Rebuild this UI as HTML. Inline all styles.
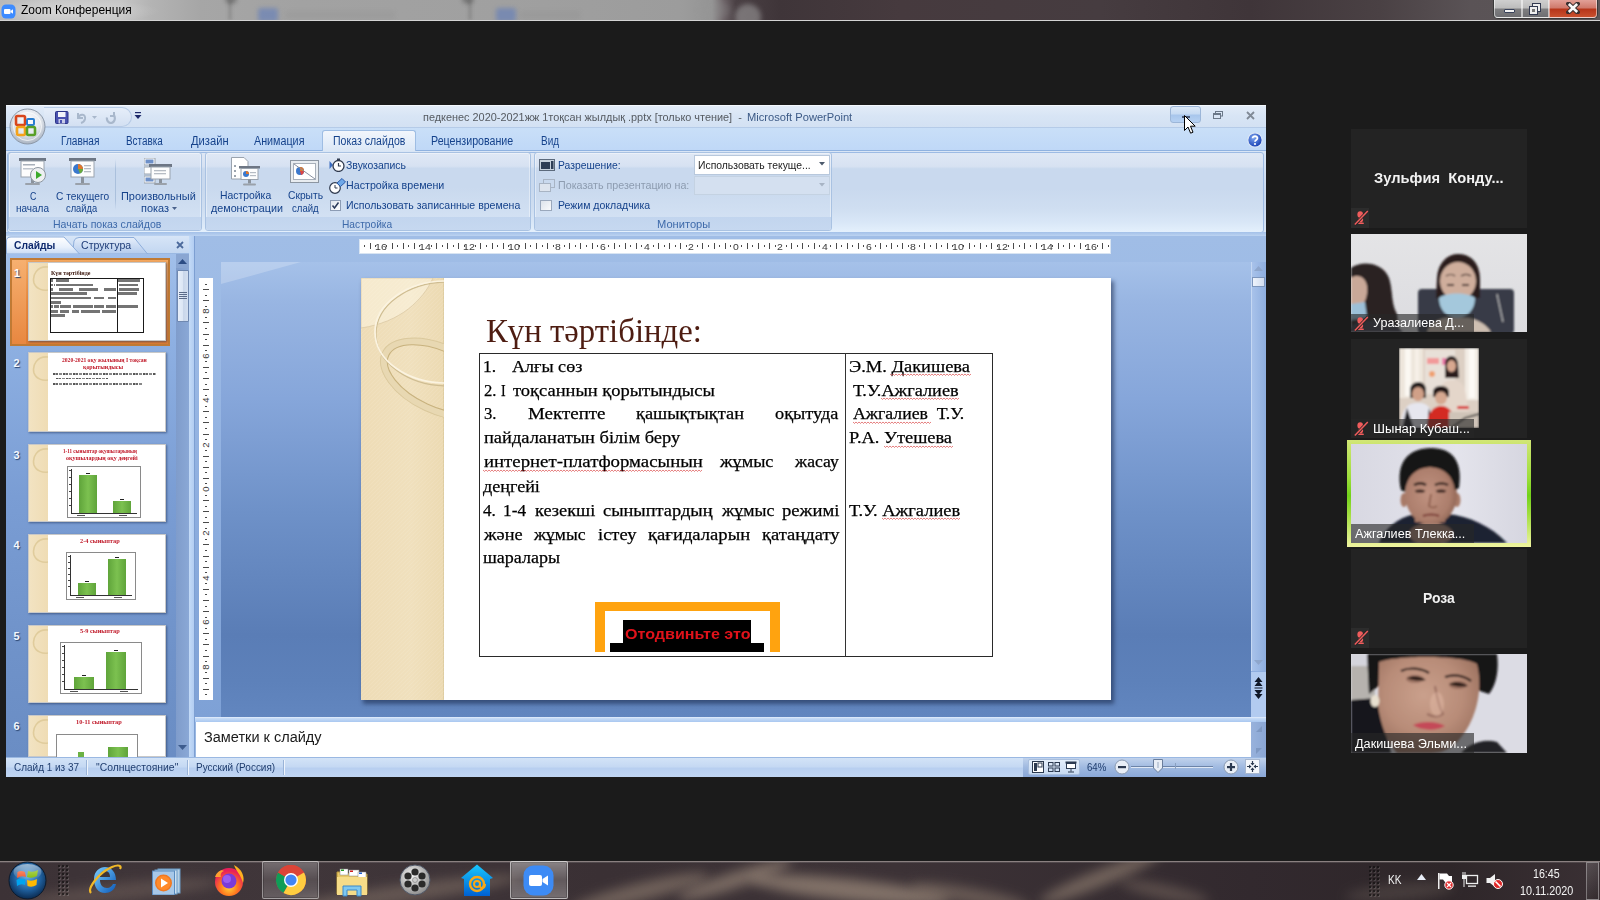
<!DOCTYPE html>
<html><head><meta charset="utf-8"><style>*{margin:0;padding:0;box-sizing:border-box}
html,body{width:1600px;height:900px;overflow:hidden;background:#1b1b1b;font-family:"Liberation Sans",sans-serif;position:relative}
.a{position:absolute}
.tx{white-space:pre;transform-origin:0 0}
</style></head><body>
<div class="a" style="left:0px;top:0px;width:1600px;height:20px;background:linear-gradient(90deg,#b9b9b9 0,#c4c4c4 40px,#c6c6c6 120px,#b4b4b4 150px,#a6a6a6 200px,#a2a2a2 300px,#a0a0a0 500px,#9c9c9c 680px,#959595 712px,#6a6064 724px,#4a4044 736px,#3f3539 780px,#463a3e 900px,#463c40 1100px,#3f3539 1250px,#4a4144 1380px,#5a5356 1470px,#5c5658 1600px)"></div>
<div class="a" style="left:0px;top:0px;width:160px;height:20px;background:radial-gradient(ellipse 90px 12px at 70px 11px,rgba(235,235,235,.45),transparent)"></div>
<div class="a" style="left:0;top:0;width:1600px;height:20px;overflow:hidden"><div class="a" style="left:228px;top:0px;width:4px;height:20px;background:rgba(60,60,60,.18);filter:blur(1.5px)"></div><div class="a" style="left:468px;top:0px;width:4px;height:20px;background:rgba(60,60,60,.18);filter:blur(1.5px)"></div><div class="a" style="left:258px;top:8px;width:20px;height:14px;background:rgba(90,120,190,.55);filter:blur(2px);border-radius:3px"></div><div class="a" style="left:496px;top:8px;width:20px;height:14px;background:rgba(90,120,190,.55);filter:blur(2px);border-radius:3px"></div><div class="a" style="left:285px;top:11px;width:110px;height:8px;background:rgba(120,120,120,.12);filter:blur(2px)"></div><div class="a" style="left:520px;top:11px;width:60px;height:8px;background:rgba(120,120,120,.12);filter:blur(2px)"></div><div class="a" style="left:735px;top:4px;width:26px;height:26px;background:rgba(170,170,170,.5);filter:blur(2.5px);border-radius:50%"></div><div class="a" style="left:700px;top:0px;width:30px;height:20px;background:rgba(150,150,150,.3);filter:blur(3px);border-radius:50%"></div><div class="a" style="left:225px;top:-6px;width:12px;height:10px;background:rgba(40,40,40,.35);filter:blur(2px);border-radius:50%"></div><div class="a" style="left:462px;top:-6px;width:12px;height:10px;background:rgba(40,40,40,.35);filter:blur(2px);border-radius:50%"></div></div>
<div class="a" style="left:0px;top:20px;width:1600px;height:1px;background:#d4d4d4"></div>
<svg class="a" style="left:1px;top:4px;" width="15" height="15" viewBox="0 0 15 15"><rect x="0.5" y="0.5" width="14" height="14" rx="4.5" fill="#3d8bff"/><rect x="3" y="5" width="6.5" height="5" rx="1" fill="#fff"/><path d="M9.5 7 L12 5.2 V9.8 L9.5 8z" fill="#fff"/></svg>
<span id="t0" class="a tx " style="left:21.00px;transform:scaleX(0.9586);top:4.42px;font-size:12.5px;line-height:12.5px;color:#000;font-weight:normal;font-family:'Liberation Sans',sans-serif;">Zoom Конференция</span>
<div class="a" style="left:1493px;top:0px;width:105px;height:19px;border:1px solid #3a3a3a;border-top:none;border-radius:0 0 5px 5px;background:#888"></div>
<div class="a" style="left:1494px;top:0px;width:28px;height:18px;border-radius:0 0 0 4px;border:1px solid rgba(255,255,255,.55);border-top:none;background:linear-gradient(180deg,#cfcfcf 0,#bdbdbd 45%,#7e7e80 55%,#6e6e72 100%)"></div>
<div class="a" style="left:1522px;top:0px;width:27px;height:18px;border:1px solid rgba(255,255,255,.55);border-top:none;background:linear-gradient(180deg,#cfcfcf 0,#bdbdbd 45%,#7e7e80 55%,#6e6e72 100%)"></div>
<div class="a" style="left:1549px;top:0px;width:48px;height:18px;border-radius:0 0 4px 0;border:1px solid rgba(255,255,255,.5);border-top:none;background:linear-gradient(180deg,#e2a097 0,#d07a6c 45%,#b7361b 55%,#c9502e 100%)"></div>
<div class="a" style="left:1504px;top:9px;width:11px;height:4px;background:#f2f2f2;border:1px solid #39425a;border-radius:1px"></div>
<svg class="a" style="left:1528px;top:2px;" width="16" height="14" viewBox="0 0 16 14"><rect x="4.5" y="1.5" width="8" height="8" fill="#eee" stroke="#333a50"/><rect x="1.5" y="4.5" width="8" height="8" fill="#eee" stroke="#333a50"/><rect x="4" y="7" width="3" height="3" fill="#777" /></svg>
<svg class="a" style="left:1566px;top:2px;" width="14" height="12" viewBox="0 0 14 12"><path d="M2.5 1.8 L11.5 10.2 M11.5 1.8 L2.5 10.2" stroke="#3a3030" stroke-width="4.6" stroke-linecap="square"/><path d="M2.8 2 L11.2 10 M11.2 2 L2.8 10" stroke="#fafafa" stroke-width="2.6" stroke-linecap="butt"/></svg>
<div class="a" style="left:6px;top:105px;width:1260px;height:672px;background:#bcd3f0"></div>
<div class="a" style="left:6px;top:105px;width:1260px;height:23px;background:linear-gradient(180deg,#e3ecf8 0,#d8e5f5 50%,#d3e1f3 100%);border-bottom:1px solid #b5cbe8"></div>
<div class="a" style="left:6px;top:105px;width:1260px;height:1px;background:#f4f8fd"></div>
<div class="a" style="left:44px;top:107px;width:88px;height:20px;border-radius:0 10px 10px 0;background:linear-gradient(180deg,#e6eef9,#d3e0f2);border:1px solid #b7cbe6;border-left:none"></div>
<svg class="a" style="left:55px;top:111px;" width="14" height="13" viewBox="0 0 14 13"><rect x="0.5" y="0.5" width="12.5" height="12" rx="1" fill="#4a52b0" stroke="#2c3488"/><rect x="3" y="1" width="7.5" height="5" fill="#f2f4fa"/><rect x="3.5" y="8" width="6.5" height="4.5" fill="#c8cce8"/><rect x="5" y="9" width="2" height="3" fill="#4a52b0"/></svg>
<svg class="a" style="left:75px;top:110px;" width="12" height="14" viewBox="0 0 12 14"><path d="M3 3 V8 H8" fill="none" stroke="#a9b8cc" stroke-width="2"/><path d="M3 8 C5 3 11 4 10 9 C9.5 11 8 12.5 6 13" fill="none" stroke="#a9b8cc" stroke-width="2"/></svg>
<svg class="a" style="left:92px;top:116px;" width="5" height="3" viewBox="0 0 5 3"><path d="M0 0 H5 L2.5 3z" fill="#a9b8cc"/></svg>
<svg class="a" style="left:105px;top:110px;" width="13" height="14" viewBox="0 0 13 14"><path d="M9 2 V6 H5" fill="none" stroke="#a9b8cc" stroke-width="2"/><path d="M9 5 C11 9 9 13 6 13 C3 13 1.5 10 2 7.5" fill="none" stroke="#a9b8cc" stroke-width="2.2"/></svg>
<svg class="a" style="left:134px;top:112px;" width="8" height="9" viewBox="0 0 8 9"><rect x="1" y="0" width="6" height="1.2" fill="#1e2a6a"/><path d="M0.5 3 H7.5 L4 7z" fill="#1e2a6a"/></svg>
<span id="t1" class="a tx " style="left:423.00px;transform:scaleX(0.9472);top:112.27px;font-size:11.5px;line-height:11.5px;color:#555a60;font-weight:normal;font-family:'Liberation Sans',sans-serif;">педкенес&nbsp;2020-2021жж&nbsp;1тоқсан&nbsp;жылдық&nbsp;.pptx&nbsp;[только&nbsp;чтение]&nbsp;&nbsp;-</span>
<span id="t2" class="a tx " style="left:747.00px;transform:scaleX(0.9684);top:112.27px;font-size:11.5px;line-height:11.5px;color:#3c5a86;font-weight:normal;font-family:'Liberation Sans',sans-serif;">Microsoft PowerPoint</span>
<div class="a" style="left:1170px;top:106px;width:31px;height:17px;border:1px solid #9cb6d8;border-radius:3px;background:linear-gradient(180deg,#dbe8f7 0,#c7dbf3 45%,#a8c6ec 55%,#b6d1f2 100%)"></div>
<div class="a" style="left:1182px;top:116px;width:8px;height:2px;background:#4a5a78"></div>
<svg class="a" style="left:1213px;top:111px;" width="10" height="8" viewBox="0 0 10 8"><rect x="2.5" y="0.5" width="7" height="4.5" fill="none" stroke="#6b7888"/><rect x="0.5" y="2.5" width="7" height="5" fill="#d9e5f4" stroke="#6b7888"/><rect x="0.5" y="2.5" width="7" height="1.5" fill="#6b7888"/></svg>
<svg class="a" style="left:1246px;top:111px;" width="9" height="9" viewBox="0 0 9 9"><path d="M1 1 L8 8 M8 1 L1 8" stroke="#808a96" stroke-width="1.8"/></svg>
<div class="a" style="left:6px;top:128px;width:1260px;height:23px;background:linear-gradient(180deg,#c9dff8 0,#bfd8f7 100%)"></div>
<div class="a" style="left:6px;top:150px;width:1260px;height:1px;background:#8fb2e0"></div>
<svg class="a" style="left:9px;top:108px;" width="37" height="37" viewBox="0 0 37 37"><defs><radialGradient id="ob" cx="50%" cy="35%" r="65%"><stop offset="0" stop-color="#ffffff"/><stop offset=".55" stop-color="#e4e8ee"/><stop offset="1" stop-color="#aab4c2"/></radialGradient></defs><circle cx="18.5" cy="18.5" r="17.5" fill="url(#ob)" stroke="#8c98a8"/><circle cx="18.5" cy="18.5" r="14" fill="none" stroke="rgba(255,255,255,.7)"/><rect x="7" y="8" width="9" height="9" rx="1.5" fill="none" stroke="#d8461c" stroke-width="2.6"/><rect x="18" y="11" width="7" height="6" rx="1" fill="none" stroke="#2a7ed0" stroke-width="2"/><rect x="8" y="19" width="8" height="8" rx="1.5" fill="none" stroke="#f4a21a" stroke-width="2.6"/><rect x="18" y="19" width="8" height="8" rx="1.5" fill="none" stroke="#58a028" stroke-width="2.6"/></svg>
<div class="a" style="left:322px;top:130px;width:94px;height:22px;border:1px solid #9ebde3;border-bottom:none;border-radius:3px 3px 0 0;background:linear-gradient(180deg,#f2f6fc 0,#e3edf9 60%,#dae6f5 100%)"></div>
<span id="t3" class="a tx " style="left:61.00px;transform:scaleX(0.8412);top:135.34px;font-size:12px;line-height:12px;color:#15428b;font-weight:normal;font-family:'Liberation Sans',sans-serif;">Главная</span>
<span id="t4" class="a tx " style="left:126.00px;transform:scaleX(0.8235);top:135.34px;font-size:12px;line-height:12px;color:#15428b;font-weight:normal;font-family:'Liberation Sans',sans-serif;">Вставка</span>
<span id="t5" class="a tx " style="left:191.00px;transform:scaleX(0.9318);top:135.34px;font-size:12px;line-height:12px;color:#15428b;font-weight:normal;font-family:'Liberation Sans',sans-serif;">Дизайн</span>
<span id="t6" class="a tx " style="left:254.00px;transform:scaleX(0.8955);top:135.34px;font-size:12px;line-height:12px;color:#15428b;font-weight:normal;font-family:'Liberation Sans',sans-serif;">Анимация</span>
<span id="t7" class="a tx " style="left:332.50px;transform:scaleX(0.8755);top:135.34px;font-size:12px;line-height:12px;color:#15428b;font-weight:normal;font-family:'Liberation Sans',sans-serif;">Показ слайдов</span>
<span id="t8" class="a tx " style="left:431.00px;transform:scaleX(0.8872);top:135.34px;font-size:12px;line-height:12px;color:#15428b;font-weight:normal;font-family:'Liberation Sans',sans-serif;">Рецензирование</span>
<span id="t9" class="a tx " style="left:541.00px;transform:scaleX(0.8292);top:135.34px;font-size:12px;line-height:12px;color:#15428b;font-weight:normal;font-family:'Liberation Sans',sans-serif;">Вид</span>
<svg class="a" style="left:1247px;top:132px;" width="16" height="16" viewBox="0 0 16 16"><defs><radialGradient id="hp" cx="40%" cy="35%" r="60%"><stop offset="0" stop-color="#7ea6f0"/><stop offset="1" stop-color="#1f47b8"/></radialGradient></defs><circle cx="8" cy="8" r="7.2" fill="url(#hp)" stroke="#dbe6f6" stroke-width="1.2"/><path d="M5.6 6.2 C5.6 3.6 10.6 3.6 10.4 6.3 C10.3 8 8 8 8 9.8" fill="none" stroke="#fff" stroke-width="1.8"/><circle cx="8" cy="12" r="1.1" fill="#fff"/></svg>
<div class="a" style="left:6px;top:151px;width:1260px;height:82px;background:linear-gradient(180deg,#d9e6f6 0,#d3e1f3 20%,#c8d8ee 55%,#d0def1 85%,#dbe7f6 100%)"></div>
<div class="a" style="left:7px;top:152px;width:1257px;height:81px;border:1px solid #9dbbe4;border-radius:3px;background:linear-gradient(180deg,#dfe8f5 0,#d7e2f2 17%,#c9d9ee 20%,#c9d9ee 45%,#cfdef1 70%,#d9e7f7 88%,#e4f0fc 100%)"></div>
<div class="a" style="left:6px;top:232px;width:1260px;height:4px;background:linear-gradient(180deg,#a3c0e8,#bcd3f1)"></div>
<div class="a" style="left:8px;top:152px;width:194px;height:79px;border:1px solid #a9c2e2;border-radius:3px;background:linear-gradient(180deg,#dfe8f5 0,#d7e2f2 17%,#c9d9ee 20%,#c9d9ee 45%,#cfdef1 70%,#d6e4f5 100%);box-shadow:inset 0 0 0 1px rgba(255,255,255,.4)"></div>
<div class="a" style="left:9px;top:217px;width:192px;height:13px;background:linear-gradient(180deg,#c2d5ee,#c6d8f0);border-radius:0 0 2px 2px"></div>
<span id="t10" class="a tx " style="left:52.50px;transform:scaleX(0.9586);top:218.79px;font-size:11px;line-height:11px;color:#3e6aaa;font-weight:normal;font-family:'Liberation Sans',sans-serif;">Начать показ слайдов</span>
<div class="a" style="left:205px;top:152px;width:326px;height:79px;border:1px solid #a9c2e2;border-radius:3px;background:linear-gradient(180deg,#dfe8f5 0,#d7e2f2 17%,#c9d9ee 20%,#c9d9ee 45%,#cfdef1 70%,#d6e4f5 100%);box-shadow:inset 0 0 0 1px rgba(255,255,255,.4)"></div>
<div class="a" style="left:206px;top:217px;width:324px;height:13px;background:linear-gradient(180deg,#c2d5ee,#c6d8f0);border-radius:0 0 2px 2px"></div>
<span id="t11" class="a tx " style="left:342.40px;transform:scaleX(0.9267);top:218.79px;font-size:11px;line-height:11px;color:#3e6aaa;font-weight:normal;font-family:'Liberation Sans',sans-serif;">Настройка</span>
<div class="a" style="left:534px;top:152px;width:298px;height:79px;border:1px solid #a9c2e2;border-radius:3px;background:linear-gradient(180deg,#dfe8f5 0,#d7e2f2 17%,#c9d9ee 20%,#c9d9ee 45%,#cfdef1 70%,#d6e4f5 100%);box-shadow:inset 0 0 0 1px rgba(255,255,255,.4)"></div>
<div class="a" style="left:535px;top:217px;width:296px;height:13px;background:linear-gradient(180deg,#c2d5ee,#c6d8f0);border-radius:0 0 2px 2px"></div>
<span id="t12" class="a tx " style="left:657.30px;transform:scaleX(1.0119);top:218.79px;font-size:11px;line-height:11px;color:#3e6aaa;font-weight:normal;font-family:'Liberation Sans',sans-serif;">Мониторы</span>
<svg class="a" style="left:18px;top:158px;" width="29" height="28" viewBox="0 0 29 28"><rect x="1" y="0" width="27" height="3" fill="#6d7684"/><rect x="3" y="3" width="23" height="16" fill="#fdfdfd" stroke="#9aa3ae"/><rect x="13" y="19" width="3" height="6" fill="#8a929c"/><rect x="7" y="25" width="15" height="2" rx="1" fill="#9aa1aa"/><rect x="5" y="6" width="12" height="1.5" fill="#a8b0ba"/><rect x="5" y="10" width="10" height="1.5" fill="#c0c6ce"/><circle cx="20" cy="17" r="7.5" fill="#eef0f2" stroke="#8d96a0"/><path d="M18 13 L24 17 L18 21z" fill="#3caa2c"/></svg>
<svg class="a" style="left:68px;top:158px;" width="29" height="28" viewBox="0 0 29 28"><rect x="1" y="0" width="27" height="3" fill="#6d7684"/><rect x="3" y="3" width="23" height="16" fill="#fdfdfd" stroke="#9aa3ae"/><rect x="13" y="19" width="3" height="6" fill="#8a929c"/><rect x="7" y="25" width="15" height="2" rx="1" fill="#9aa1aa"/><circle cx="10" cy="11" r="5" fill="#3a78cc"/><path d="M10 11 V6 A5 5 0 0 1 15 11z" fill="#e0772a"/><path d="M10 11 H15 A5 5 0 0 1 12 15.5z" fill="#6aaa3a"/><rect x="16" y="7" width="7" height="1.3" fill="#b6bcc4"/><rect x="16" y="10" width="7" height="1.3" fill="#b6bcc4"/><rect x="16" y="13" width="7" height="1.3" fill="#b6bcc4"/></svg>
<span id="t13" class="a tx " style="left:29.60px;transform:scaleX(0.8000);top:190.89px;font-size:11px;line-height:11px;color:#15428b;font-weight:normal;font-family:'Liberation Sans',sans-serif;">С</span>
<span id="t14" class="a tx " style="left:15.60px;transform:scaleX(0.9082);top:202.99px;font-size:11px;line-height:11px;color:#15428b;font-weight:normal;font-family:'Liberation Sans',sans-serif;">начала</span>
<span id="t15" class="a tx " style="left:55.70px;transform:scaleX(0.9252);top:190.89px;font-size:11px;line-height:11px;color:#15428b;font-weight:normal;font-family:'Liberation Sans',sans-serif;">С текущего</span>
<span id="t16" class="a tx " style="left:66.00px;transform:scaleX(0.8458);top:202.99px;font-size:11px;line-height:11px;color:#15428b;font-weight:normal;font-family:'Liberation Sans',sans-serif;">слайда</span>
<div class="a" style="left:115px;top:159px;width:1px;height:51px;background:linear-gradient(180deg,transparent,#aac0dc 20%,#aac0dc 80%,transparent)"></div>
<svg class="a" style="left:144px;top:158px;" width="29" height="28" viewBox="0 0 29 28"><rect x="0" y="0" width="11" height="7" fill="#fff" stroke="#9aa3ae"/><rect x="1.5" y="1.5" width="8" height="4" fill="#6e90c8"/><rect x="0" y="9" width="11" height="7" fill="#fff" stroke="#9aa3ae"/><rect x="0" y="18" width="11" height="7" fill="#fff" stroke="#9aa3ae"/><rect x="1.5" y="19.5" width="8" height="4" fill="#6e90c8"/><rect x="5" y="6" width="23" height="3" fill="#6d7684"/><rect x="7" y="9" width="19" height="12" fill="#fdfdfd" stroke="#9aa3ae"/><rect x="10" y="12" width="12" height="1.3" fill="#b6bcc4"/><rect x="10" y="15" width="12" height="1.3" fill="#b6bcc4"/><rect x="15" y="21" width="3" height="4" fill="#8a929c"/><rect x="10" y="25" width="13" height="2" rx="1" fill="#9aa1aa"/></svg>
<span id="t17" class="a tx " style="left:121.40px;transform:scaleX(0.9939);top:190.89px;font-size:11px;line-height:11px;color:#15428b;font-weight:normal;font-family:'Liberation Sans',sans-serif;">Произвольный</span>
<span id="t18" class="a tx " style="left:141.00px;transform:scaleX(0.9956);top:202.99px;font-size:11px;line-height:11px;color:#15428b;font-weight:normal;font-family:'Liberation Sans',sans-serif;">показ</span>
<svg class="a" style="left:172px;top:207px;" width="5" height="3" viewBox="0 0 5 3"><path d="M0 0 H5 L2.5 3z" fill="#4a628c"/></svg>
<svg class="a" style="left:231px;top:157px;" width="29" height="29" viewBox="0 0 29 29"><path d="M0.5 0.5 H13 L17 4.5 V22 H0.5z" fill="#fff" stroke="#9aa3ae"/><circle cx="4" cy="9" r="1" fill="#7a8694"/><circle cx="4" cy="14" r="1" fill="#7a8694"/><circle cx="4" cy="19" r="1" fill="#7a8694"/><rect x="8" y="9" width="21" height="2.5" fill="#6d7684"/><rect x="10" y="11.5" width="17" height="11" fill="#fdfdfd" stroke="#9aa3ae"/><circle cx="15" cy="17" r="3" fill="#3a78cc"/><path d="M15 17 V14 A3 3 0 0 1 18 17z" fill="#e0772a"/><rect x="19" y="15" width="6" height="1.2" fill="#b6bcc4"/><rect x="19" y="18" width="6" height="1.2" fill="#b6bcc4"/><rect x="17" y="22.5" width="3" height="4" fill="#8a929c"/><rect x="12" y="26.5" width="13" height="2" rx="1" fill="#9aa1aa"/></svg>
<span id="t19" class="a tx " style="left:220.00px;transform:scaleX(0.9449);top:190.49px;font-size:11px;line-height:11px;color:#15428b;font-weight:normal;font-family:'Liberation Sans',sans-serif;">Настройка</span>
<span id="t20" class="a tx " style="left:210.60px;transform:scaleX(0.9767);top:202.79px;font-size:11px;line-height:11px;color:#15428b;font-weight:normal;font-family:'Liberation Sans',sans-serif;">демонстрации</span>
<svg class="a" style="left:290px;top:160px;" width="30" height="24" viewBox="0 0 30 24"><rect x="0.5" y="0.5" width="28" height="22" fill="#e8ecf0" stroke="#8c96a2"/><rect x="3.5" y="3.5" width="22" height="16" fill="#fff" stroke="#a8b0ba"/><circle cx="10" cy="11" r="4" fill="#3a78cc"/><path d="M10 11 V7 A4 4 0 0 1 14 11z" fill="#e0772a"/><path d="M10 11 H14 A4 4 0 0 1 11 15z" fill="#d44"/><path d="M4 4 L25 19" stroke="#8890a0" stroke-width="1"/></svg>
<span id="t21" class="a tx " style="left:287.50px;transform:scaleX(0.9334);top:190.49px;font-size:11px;line-height:11px;color:#15428b;font-weight:normal;font-family:'Liberation Sans',sans-serif;">Скрыть</span>
<span id="t22" class="a tx " style="left:291.80px;transform:scaleX(0.8723);top:202.79px;font-size:11px;line-height:11px;color:#15428b;font-weight:normal;font-family:'Liberation Sans',sans-serif;">слайд</span>
<svg class="a" style="left:329px;top:158px;" width="16" height="14" viewBox="0 0 16 14"><path d="M0.5 3 L4 7 L0.5 11z" fill="#3a6cc0"/><circle cx="9.5" cy="8" r="5.5" fill="#fff" stroke="#2f3a4e" stroke-width="1.3"/><path d="M9.5 5 V8 H12" fill="none" stroke="#2f3a4e" stroke-width="1.2"/><rect x="8" y="0.5" width="3" height="1.5" fill="#2f3a4e"/></svg>
<span id="t23" class="a tx " style="left:346.20px;transform:scaleX(0.9505);top:159.89px;font-size:11px;line-height:11px;color:#15428b;font-weight:normal;font-family:'Liberation Sans',sans-serif;">Звукозапись</span>
<svg class="a" style="left:329px;top:178px;" width="17" height="16" viewBox="0 0 17 16"><circle cx="6" cy="10" r="5.3" fill="#fff" stroke="#2f3a4e" stroke-width="1.2"/><path d="M6 7 V10 H8.5" fill="none" stroke="#2f3a4e"/><path d="M8 5 L13 0.5 L16.5 4 L11.5 8.5z" fill="#6fa8e8" stroke="#2a5aa8"/></svg>
<span id="t24" class="a tx " style="left:346.20px;transform:scaleX(0.9719);top:179.89px;font-size:11px;line-height:11px;color:#15428b;font-weight:normal;font-family:'Liberation Sans',sans-serif;">Настройка времени</span>
<div class="a" style="left:330px;top:200px;width:11px;height:11px;border:1px solid #8c9cb4;background:linear-gradient(135deg,#e0e6ee,#fff)"></div>
<svg class="a" style="left:331px;top:201px;" width="9" height="9" viewBox="0 0 9 9"><path d="M1.5 4.5 L3.5 7 L7.5 1.5" fill="none" stroke="#2a3a5a" stroke-width="1.5"/></svg>
<span id="t25" class="a tx " style="left:346.20px;transform:scaleX(0.9579);top:200.09px;font-size:11px;line-height:11px;color:#15428b;font-weight:normal;font-family:'Liberation Sans',sans-serif;">Использовать записанные времена</span>
<svg class="a" style="left:539px;top:159px;" width="16" height="12" viewBox="0 0 16 12"><rect x="0.5" y="0.5" width="15" height="11" fill="#c8d2de" stroke="#5c6a7c"/><rect x="2" y="3" width="9" height="7" fill="#2e3e56"/><rect x="12" y="2" width="2.5" height="8" fill="#2e3e56"/></svg>
<span id="t26" class="a tx " style="left:558.30px;transform:scaleX(0.9395);top:160.09px;font-size:11px;line-height:11px;color:#15428b;font-weight:normal;font-family:'Liberation Sans',sans-serif;">Разрешение:</span>
<div class="a" style="left:694px;top:155px;width:136px;height:20px;border:1px solid #b8c8dc;background:#fff"></div>
<span id="t27" class="a tx " style="left:698.00px;transform:scaleX(0.9425);top:160.09px;font-size:11px;line-height:11px;color:#222;font-weight:normal;font-family:'Liberation Sans',sans-serif;">Использовать текуще...</span>
<svg class="a" style="left:819px;top:162px;" width="6" height="4" viewBox="0 0 6 4"><path d="M0 0 H6 L3 3.5z" fill="#4c5a6c"/></svg>
<svg class="a" style="left:539px;top:179px;" width="16" height="14" viewBox="0 0 16 14"><rect x="4.5" y="0.5" width="11" height="8" fill="none" stroke="#a8b4c4"/><rect x="0.5" y="4.5" width="11" height="8" fill="#dde4ee" stroke="#a8b4c4"/></svg>
<span id="t28" class="a tx " style="left:558.30px;transform:scaleX(0.9736);top:179.79px;font-size:11px;line-height:11px;color:#8d9cb0;font-weight:normal;font-family:'Liberation Sans',sans-serif;">Показать презентацию на:</span>
<div class="a" style="left:694px;top:176px;width:136px;height:19px;border:1px solid #c4d2e2;background:#d4e0f0"></div>
<svg class="a" style="left:819px;top:183px;" width="6" height="4" viewBox="0 0 6 4"><path d="M0 0 H6 L3 3.5z" fill="#a8b4c4"/></svg>
<div class="a" style="left:540px;top:200px;width:12px;height:11px;border:1px solid #9aa8bc;background:linear-gradient(135deg,#dde3eb,#fafbfc)"></div>
<span id="t29" class="a tx " style="left:558.00px;transform:scaleX(0.9556);top:200.19px;font-size:11px;line-height:11px;color:#15428b;font-weight:normal;font-family:'Liberation Sans',sans-serif;">Режим докладчика</span>
<svg class="a" style="left:1184px;top:115px;" width="13" height="20" viewBox="0 0 13 20"><path d="M0.5 0.5 V15.5 L4 12 L6.6 18.2 L9 17.2 L6.5 11.2 H11.2z" fill="#fff" stroke="#000" stroke-width="1"/></svg>
<div class="a" style="left:6px;top:236px;width:183px;height:521px;background:linear-gradient(180deg,#a6c3ec 0,#8eb0e2 20%,#7a9dd4 50%,#6f92c9 80%,#6a8dc4 100%)"></div>
<div class="a" style="left:6px;top:236px;width:183px;height:18px;background:linear-gradient(180deg,#d7e5f7 0,#c3d7f1 100%);border-bottom:1px solid #9ab8e2"></div>
<svg class="a" style="left:72px;top:237px;" width="76" height="17" viewBox="0 0 76 17"><defs><linearGradient id="st" x1="0" y1="0" x2="0" y2="1"><stop offset="0" stop-color="#e6eefa"/><stop offset="1" stop-color="#b3cbed"/></linearGradient></defs><path d="M0.5 17 L2 4 Q3 0.5 7 0.5 H62 L75.5 17z" fill="url(#st)" stroke="#8eaedb"/></svg>
<svg class="a" style="left:6px;top:236px;" width="74" height="18" viewBox="0 0 74 18"><defs><linearGradient id="sl" x1="0" y1="0" x2="0" y2="1"><stop offset="0" stop-color="#ffffff"/><stop offset=".6" stop-color="#e8f0fb"/><stop offset="1" stop-color="#c8dbf4"/></linearGradient></defs><path d="M0.5 18 V5 Q0.5 1 5 1 H58 L73.5 18z" fill="url(#sl)" stroke="#8eaedb"/></svg>
<span id="t30" class="a tx " style="left:13.50px;transform:scaleX(0.9362);top:239.69px;font-size:11px;line-height:11px;color:#0f2a6e;font-weight:bold;font-family:'Liberation Sans',sans-serif;">Слайды</span>
<span id="t31" class="a tx " style="left:81.00px;transform:scaleX(0.9610);top:240.19px;font-size:11px;line-height:11px;color:#1e3c78;font-weight:normal;font-family:'Liberation Sans',sans-serif;">Структура</span>
<svg class="a" style="left:176px;top:241px;" width="8" height="8" viewBox="0 0 8 8"><path d="M1 1 L7 7 M7 1 L1 7" stroke="#4c6a9c" stroke-width="1.8"/></svg>
<div class="a" style="left:176px;top:254px;width:13px;height:503px;background:linear-gradient(90deg,#7f9ccb,#8aa8d6);"></div>
<div class="a" style="left:176px;top:254px;width:13px;height:14px;background:#8aa6d2"></div>
<svg class="a" style="left:178px;top:259px;" width="9" height="5" viewBox="0 0 9 5"><path d="M0 5 L4.5 0 L9 5z" fill="#2d4d84"/></svg>
<div class="a" style="left:177px;top:270px;width:12px;height:52px;border:1px solid #6f88b0;border-radius:1px;background:linear-gradient(90deg,#e6eefa 0,#dce6f4 50%,#c9d6ea 51%,#d3dff0 100%)"></div>
<div class="a" style="left:179px;top:292px;width:8px;height:1px;background:#5a6a88"></div>
<div class="a" style="left:179px;top:294px;width:8px;height:1px;background:#5a6a88"></div>
<div class="a" style="left:179px;top:296px;width:8px;height:1px;background:#5a6a88"></div>
<div class="a" style="left:179px;top:298px;width:8px;height:1px;background:#5a6a88"></div>
<svg class="a" style="left:178px;top:745px;" width="9" height="5" viewBox="0 0 9 5"><path d="M0 0 L4.5 5 L9 0z" fill="#3d5c8e"/></svg>
<div class="a" style="left:10px;top:258px;width:160px;height:88px;border:2px solid #c07a34;background:linear-gradient(180deg,#f4a860 0,#e98a3e 50%,#de7c34 100%)"></div>
<div class="a" style="left:12px;top:260px;width:14px;height:84px;background:linear-gradient(180deg,#f6b070,#e88740)"></div>
<div class="a" style="left:28px;top:262px;width:138px;height:79px;background:#fff;box-shadow:1px 1px 2px rgba(30,50,90,.55);border:1px solid #c8c8c8"></div>
<div class="a" style="left:29px;top:263px;width:19px;height:77px;background:linear-gradient(90deg,#f2e3c2,#efdcb4)"></div>
<svg class="a" style="left:29px;top:263px;" width="19" height="40" viewBox="0 0 19 40"><path d="M19 4 C8 3 3 12 5 20 C7 26 14 28 19 27" fill="none" stroke="#e0cc9c" stroke-width="1.6"/></svg>
<span id="t32" class="a tx " style="left:14.00px;top:268.19px;font-size:11px;line-height:11px;color:#fff;font-weight:bold;font-family:'Liberation Sans',sans-serif;text-shadow:1px 1px 1px #2c4670">1</span>
<div class="a" style="left:28px;top:352px;width:138px;height:80px;background:#fff;box-shadow:1px 1px 2px rgba(30,50,90,.55);border:1px solid #c8c8c8"></div>
<div class="a" style="left:29px;top:353px;width:19px;height:78px;background:linear-gradient(90deg,#f2e3c2,#efdcb4)"></div>
<svg class="a" style="left:29px;top:353px;" width="19" height="40" viewBox="0 0 19 40"><path d="M19 4 C8 3 3 12 5 20 C7 26 14 28 19 27" fill="none" stroke="#e0cc9c" stroke-width="1.6"/></svg>
<span id="t33" class="a tx " style="left:13.50px;top:358.19px;font-size:11px;line-height:11px;color:#f4f8ff;font-weight:bold;font-family:'Liberation Sans',sans-serif;text-shadow:1px 1px 1px #2c4670">2</span>
<div class="a" style="left:28px;top:444px;width:138px;height:78px;background:#fff;box-shadow:1px 1px 2px rgba(30,50,90,.55);border:1px solid #c8c8c8"></div>
<div class="a" style="left:29px;top:445px;width:19px;height:76px;background:linear-gradient(90deg,#f2e3c2,#efdcb4)"></div>
<svg class="a" style="left:29px;top:445px;" width="19" height="40" viewBox="0 0 19 40"><path d="M19 4 C8 3 3 12 5 20 C7 26 14 28 19 27" fill="none" stroke="#e0cc9c" stroke-width="1.6"/></svg>
<span id="t34" class="a tx " style="left:13.50px;top:450.19px;font-size:11px;line-height:11px;color:#f4f8ff;font-weight:bold;font-family:'Liberation Sans',sans-serif;text-shadow:1px 1px 1px #2c4670">3</span>
<div class="a" style="left:28px;top:534px;width:138px;height:79px;background:#fff;box-shadow:1px 1px 2px rgba(30,50,90,.55);border:1px solid #c8c8c8"></div>
<div class="a" style="left:29px;top:535px;width:19px;height:77px;background:linear-gradient(90deg,#f2e3c2,#efdcb4)"></div>
<svg class="a" style="left:29px;top:535px;" width="19" height="40" viewBox="0 0 19 40"><path d="M19 4 C8 3 3 12 5 20 C7 26 14 28 19 27" fill="none" stroke="#e0cc9c" stroke-width="1.6"/></svg>
<span id="t35" class="a tx " style="left:13.50px;top:540.19px;font-size:11px;line-height:11px;color:#f4f8ff;font-weight:bold;font-family:'Liberation Sans',sans-serif;text-shadow:1px 1px 1px #2c4670">4</span>
<div class="a" style="left:28px;top:625px;width:138px;height:78px;background:#fff;box-shadow:1px 1px 2px rgba(30,50,90,.55);border:1px solid #c8c8c8"></div>
<div class="a" style="left:29px;top:626px;width:19px;height:76px;background:linear-gradient(90deg,#f2e3c2,#efdcb4)"></div>
<svg class="a" style="left:29px;top:626px;" width="19" height="40" viewBox="0 0 19 40"><path d="M19 4 C8 3 3 12 5 20 C7 26 14 28 19 27" fill="none" stroke="#e0cc9c" stroke-width="1.6"/></svg>
<span id="t36" class="a tx " style="left:13.50px;top:631.19px;font-size:11px;line-height:11px;color:#f4f8ff;font-weight:bold;font-family:'Liberation Sans',sans-serif;text-shadow:1px 1px 1px #2c4670">5</span>
<div class="a" style="left:28px;top:715px;width:138px;height:42px;background:#fff;box-shadow:1px 1px 2px rgba(30,50,90,.55);border:1px solid #c8c8c8"></div>
<div class="a" style="left:29px;top:716px;width:19px;height:40px;background:linear-gradient(90deg,#f2e3c2,#efdcb4)"></div>
<svg class="a" style="left:29px;top:716px;" width="19" height="40" viewBox="0 0 19 40"><path d="M19 4 C8 3 3 12 5 20 C7 26 14 28 19 27" fill="none" stroke="#e0cc9c" stroke-width="1.6"/></svg>
<span id="t37" class="a tx " style="left:13.50px;top:721.19px;font-size:11px;line-height:11px;color:#f4f8ff;font-weight:bold;font-family:'Liberation Sans',sans-serif;text-shadow:1px 1px 1px #2c4670">6</span>
<span id="t38" class="a tx " style="left:50.91px;transform:scaleX(0.8528);top:270.07px;font-size:7px;line-height:7px;color:#3a160c;font-weight:bold;font-family:'Liberation Serif',sans-serif;">Күн тәртібінде</span>
<div class="a" style="left:50px;top:278px;width:94px;height:55px;border:1px solid #1a1a1a"></div>
<div class="a" style="left:117px;top:278px;width:1px;height:55px;background:#1a1a1a"></div>
<div class="a" style="left:50.59px;top:279.36px;width:2.18px;height:2.8px;background:rgba(30,30,30,.62)"></div>
<div class="a" style="left:55.77px;top:279.36px;width:12.99px;height:2.8px;background:rgba(30,30,30,.62)"></div>
<div class="a" style="left:50.59px;top:283.67px;width:2.25px;height:2.8px;background:rgba(30,30,30,.62)"></div>
<div class="a" style="left:53.69px;top:283.67px;width:0.90px;height:2.8px;background:rgba(30,30,30,.62)"></div>
<div class="a" style="left:55.88px;top:283.67px;width:37.26px;height:2.8px;background:rgba(30,30,30,.62)"></div>
<div class="a" style="left:50.59px;top:287.93px;width:2.25px;height:2.8px;background:rgba(30,30,30,.62)"></div>
<div class="a" style="left:58.64px;top:287.93px;width:14.15px;height:2.8px;background:rgba(30,30,30,.62)"></div>
<div class="a" style="left:78.53px;top:287.93px;width:19.85px;height:2.8px;background:rgba(30,30,30,.62)"></div>
<div class="a" style="left:104.25px;top:287.93px;width:11.76px;height:2.8px;background:rgba(30,30,30,.62)"></div>
<div class="a" style="left:50.59px;top:292.33px;width:36.20px;height:2.8px;background:rgba(30,30,30,.62)"></div>
<div class="a" style="left:50.59px;top:296.69px;width:40.25px;height:2.8px;background:rgba(30,30,30,.62)"></div>
<div class="a" style="left:93.87px;top:296.69px;width:10.12px;height:2.8px;background:rgba(30,30,30,.62)"></div>
<div class="a" style="left:107.67px;top:296.69px;width:8.34px;height:2.8px;background:rgba(30,30,30,.62)"></div>
<div class="a" style="left:50.52px;top:301.14px;width:10.52px;height:2.8px;background:rgba(30,30,30,.62)"></div>
<div class="a" style="left:50.52px;top:305.49px;width:2.32px;height:2.8px;background:rgba(30,30,30,.62)"></div>
<div class="a" style="left:54.39px;top:305.49px;width:4.14px;height:2.8px;background:rgba(30,30,30,.62)"></div>
<div class="a" style="left:60.02px;top:305.49px;width:11.15px;height:2.8px;background:rgba(30,30,30,.62)"></div>
<div class="a" style="left:72.55px;top:305.49px;width:20.13px;height:2.8px;background:rgba(30,30,30,.62)"></div>
<div class="a" style="left:94.17px;top:305.49px;width:9.90px;height:2.8px;background:rgba(30,30,30,.62)"></div>
<div class="a" style="left:105.51px;top:305.49px;width:10.63px;height:2.8px;background:rgba(30,30,30,.62)"></div>
<div class="a" style="left:50.52px;top:309.85px;width:7.19px;height:2.8px;background:rgba(30,30,30,.62)"></div>
<div class="a" style="left:59.65px;top:309.85px;width:9.75px;height:2.8px;background:rgba(30,30,30,.62)"></div>
<div class="a" style="left:71.61px;top:309.85px;width:7.16px;height:2.8px;background:rgba(30,30,30,.62)"></div>
<div class="a" style="left:80.81px;top:309.85px;width:18.77px;height:2.8px;background:rgba(30,30,30,.62)"></div>
<div class="a" style="left:101.77px;top:309.85px;width:14.37px;height:2.8px;background:rgba(30,30,30,.62)"></div>
<div class="a" style="left:50.52px;top:314.12px;width:14.28px;height:2.8px;background:rgba(30,30,30,.62)"></div>
<div class="a" style="left:117.77px;top:279.36px;width:22.36px;height:2.8px;background:rgba(30,30,30,.62)"></div>
<div class="a" style="left:118.60px;top:283.67px;width:19.43px;height:2.8px;background:rgba(30,30,30,.62)"></div>
<div class="a" style="left:118.60px;top:287.93px;width:20.42px;height:2.8px;background:rgba(30,30,30,.62)"></div>
<div class="a" style="left:117.77px;top:292.33px;width:19.04px;height:2.8px;background:rgba(30,30,30,.62)"></div>
<div class="a" style="left:117.77px;top:305.49px;width:20.44px;height:2.8px;background:rgba(30,30,30,.62)"></div>
<span id="t39" class="a tx " style="left:62.00px;transform:scaleX(0.8601);top:357.06px;font-size:6.5px;line-height:6.5px;color:#c01828;font-weight:bold;font-family:'Liberation Serif',sans-serif;">2020-2021 оқу жылының І тоқсан</span>
<span id="t40" class="a tx " style="left:83.00px;transform:scaleX(0.9102);top:364.06px;font-size:6.5px;line-height:6.5px;color:#c01828;font-weight:bold;font-family:'Liberation Serif',sans-serif;">қорытындысы</span>
<div class="a" style="left:53px;top:373px;width:103px;height:1.6px;background:repeating-linear-gradient(90deg,#555 0 2px,#aaa 2px 3px,#666 3px 5px,#fff 5px 6px,#888 6px 9px,#fff 9px 10px)"></div>
<div class="a" style="left:56px;top:377.5px;width:52px;height:1.6px;background:repeating-linear-gradient(90deg,#555 0 2px,#aaa 2px 3px,#666 3px 5px,#fff 5px 6px,#888 6px 9px,#fff 9px 10px)"></div>
<div class="a" style="left:53px;top:383px;width:90px;height:1.6px;background:repeating-linear-gradient(90deg,#555 0 2px,#aaa 2px 3px,#666 3px 5px,#fff 5px 6px,#888 6px 9px,#fff 9px 10px)"></div>
<span id="t41" class="a tx " style="left:63.00px;transform:scaleX(0.7816);top:448.06px;font-size:6.5px;line-height:6.5px;color:#c01828;font-weight:bold;font-family:'Liberation Serif',sans-serif;">1-11 сыныптар оқушыларының</span>
<span id="t42" class="a tx " style="left:66.00px;transform:scaleX(0.9947);top:455.48px;font-size:6px;line-height:6px;color:#c01828;font-weight:bold;font-family:'Liberation Serif',sans-serif;">оқушылардың оқу деңгейі</span>
<div class="a" style="left:67px;top:466px;width:74px;height:52px;background:#fff;border:1px solid #8a8a8a"></div>
<div class="a" style="left:71px;top:469px;width:1px;height:44px;background:#333"></div>
<div class="a" style="left:71px;top:513px;width:66px;height:1px;background:#333"></div>
<div class="a" style="left:69px;top:470px;width:2px;height:1px;background:#444"></div>
<div class="a" style="left:69px;top:477px;width:2px;height:1px;background:#444"></div>
<div class="a" style="left:69px;top:484px;width:2px;height:1px;background:#444"></div>
<div class="a" style="left:69px;top:491px;width:2px;height:1px;background:#444"></div>
<div class="a" style="left:69px;top:498px;width:2px;height:1px;background:#444"></div>
<div class="a" style="left:69px;top:505px;width:2px;height:1px;background:#444"></div>
<div class="a" style="left:79px;top:475px;width:18px;height:38px;background:linear-gradient(90deg,#5fa43a,#7cc150,#5fa43a)"></div>
<div class="a" style="left:86px;top:473px;width:4px;height:1px;background:#222"></div>
<div class="a" style="left:113px;top:501px;width:18px;height:12px;background:linear-gradient(90deg,#5fa43a,#7cc150,#5fa43a)"></div>
<div class="a" style="left:120px;top:499px;width:4px;height:1px;background:#222"></div>
<div class="a" style="left:77px;top:515px;width:8px;height:1px;background:#555"></div>
<div class="a" style="left:119px;top:515px;width:8px;height:1px;background:#555"></div>
<span id="t43" class="a tx " style="left:80.00px;transform:scaleX(0.9677);top:538.06px;font-size:6.5px;line-height:6.5px;color:#c01828;font-weight:bold;font-family:'Liberation Serif',sans-serif;">2-4 сыныптар</span>
<div class="a" style="left:66px;top:552px;width:70px;height:48px;background:#fff;border:1px solid #8a8a8a"></div>
<div class="a" style="left:70px;top:555px;width:1px;height:40px;background:#333"></div>
<div class="a" style="left:70px;top:595px;width:62px;height:1px;background:#333"></div>
<div class="a" style="left:68px;top:556px;width:2px;height:1px;background:#444"></div>
<div class="a" style="left:68px;top:562px;width:2px;height:1px;background:#444"></div>
<div class="a" style="left:68px;top:568px;width:2px;height:1px;background:#444"></div>
<div class="a" style="left:68px;top:574px;width:2px;height:1px;background:#444"></div>
<div class="a" style="left:68px;top:580px;width:2px;height:1px;background:#444"></div>
<div class="a" style="left:68px;top:586px;width:2px;height:1px;background:#444"></div>
<div class="a" style="left:78px;top:583px;width:18px;height:12px;background:linear-gradient(90deg,#5fa43a,#7cc150,#5fa43a)"></div>
<div class="a" style="left:85px;top:581px;width:4px;height:1px;background:#222"></div>
<div class="a" style="left:108px;top:559px;width:18px;height:36px;background:linear-gradient(90deg,#5fa43a,#7cc150,#5fa43a)"></div>
<div class="a" style="left:115px;top:557px;width:4px;height:1px;background:#222"></div>
<div class="a" style="left:76px;top:597px;width:8px;height:1px;background:#555"></div>
<div class="a" style="left:114px;top:597px;width:8px;height:1px;background:#555"></div>
<span id="t44" class="a tx " style="left:80.00px;transform:scaleX(0.9677);top:628.06px;font-size:6.5px;line-height:6.5px;color:#c01828;font-weight:bold;font-family:'Liberation Serif',sans-serif;">5-9 сыныптар</span>
<div class="a" style="left:60px;top:642px;width:82px;height:52px;background:#fff;border:1px solid #8a8a8a"></div>
<div class="a" style="left:64px;top:645px;width:1px;height:44px;background:#333"></div>
<div class="a" style="left:64px;top:689px;width:74px;height:1px;background:#333"></div>
<div class="a" style="left:62px;top:646px;width:2px;height:1px;background:#444"></div>
<div class="a" style="left:62px;top:653px;width:2px;height:1px;background:#444"></div>
<div class="a" style="left:62px;top:660px;width:2px;height:1px;background:#444"></div>
<div class="a" style="left:62px;top:667px;width:2px;height:1px;background:#444"></div>
<div class="a" style="left:62px;top:674px;width:2px;height:1px;background:#444"></div>
<div class="a" style="left:62px;top:681px;width:2px;height:1px;background:#444"></div>
<div class="a" style="left:74px;top:677px;width:20px;height:12px;background:linear-gradient(90deg,#5fa43a,#7cc150,#5fa43a)"></div>
<div class="a" style="left:82px;top:675px;width:4px;height:1px;background:#222"></div>
<div class="a" style="left:106px;top:652px;width:20px;height:37px;background:linear-gradient(90deg,#5fa43a,#7cc150,#5fa43a)"></div>
<div class="a" style="left:114px;top:650px;width:4px;height:1px;background:#222"></div>
<div class="a" style="left:70px;top:691px;width:8px;height:1px;background:#555"></div>
<div class="a" style="left:120px;top:691px;width:8px;height:1px;background:#555"></div>
<span id="t45" class="a tx " style="left:76.00px;transform:scaleX(0.9689);top:719.06px;font-size:6.5px;line-height:6.5px;color:#c01828;font-weight:bold;font-family:'Liberation Serif',sans-serif;">10-11 сыныптар</span>
<div class="a" style="left:56px;top:734px;width:82px;height:23px;background:#fff;border:1px solid #8a8a8a;border-bottom:none"></div>
<div class="a" style="left:78px;top:752px;width:6px;height:5px;background:#6cb244"></div>
<div class="a" style="left:108px;top:747px;width:20px;height:10px;background:linear-gradient(90deg,#5fa43a,#7cc150,#5fa43a)"></div>
<div class="a" style="left:189px;top:236px;width:6px;height:521px;background:linear-gradient(90deg,#c4dbf7,#b2cdf2);border-right:1px solid #7d9fd2"></div>
<div class="a" style="left:195px;top:236px;width:1071px;height:481px;background:linear-gradient(180deg,#a0bde6 0,#9cbae5 20%,#90b0e0 50%,#84a6d9 80%,#7ea1d6 100%)"></div>
<div class="a" style="left:221px;top:262px;width:1030px;height:455px;background:linear-gradient(180deg,#a5c1e9 0,#98b5e2 9%,#86a6da 30%,#6e91c8 55%,#5a7db6 82%,#5d81ba 92%,#6286bf 100%)"></div>
<svg class="a" style="left:221px;top:262px;" width="100" height="24" viewBox="0 0 100 24"><path d="M0 0 H80 L0 22z" fill="rgba(255,255,255,.22)"/></svg>
<div class="a" style="left:1251px;top:262px;width:15px;height:455px;background:linear-gradient(90deg,#a8c2ea,#8eaedf);border-left:1px solid #c5d8f3"></div>
<svg class="a" style="left:1254px;top:266px;" width="9" height="5" viewBox="0 0 9 5"><path d="M0 5 L4.5 0 L9 5z" fill="#8ea6cc"/></svg>
<div class="a" style="left:1252px;top:277px;width:13px;height:10px;border:1px solid #7d96bc;background:linear-gradient(90deg,#eef3fb,#d2ddef)"></div>
<svg class="a" style="left:1254px;top:660px;" width="9" height="5" viewBox="0 0 9 5"><path d="M0 0 L4.5 5 L9 0z" fill="#8ea6cc"/></svg>
<div class="a" style="left:1251px;top:671px;width:15px;height:46px;background:#b2cbf0;border-top:1px solid #8eaedf"></div>
<svg class="a" style="left:1254px;top:676px;" width="9" height="24" viewBox="0 0 9 24"><path d="M0.5 6 L4.5 1 L8.5 6z M0.5 10 L4.5 5 L8.5 10z" fill="#101828"/><rect x="0.5" y="11.5" width="8" height="1" fill="#101828"/><path d="M0.5 14 L4.5 19 L8.5 14z M0.5 18 L4.5 23 L8.5 18z" fill="#101828"/></svg>
<div class="a" style="left:360px;top:240px;width:750px;height:13px;background:#fff;box-shadow:0 0 0 1px #d8e4f2"></div>
<div class="a" style="left:364px;top:245px;width:1px;height:2px;background:#4a4a4a"></div>
<div class="a" style="left:370px;top:243px;width:1px;height:6px;background:#4a4a4a"></div>
<div class="a" style="left:375px;top:245px;width:1px;height:2px;background:#4a4a4a"></div>
<div class="a" style="left:386px;top:245px;width:1px;height:2px;background:#4a4a4a"></div>
<div class="a" style="left:392px;top:243px;width:1px;height:6px;background:#4a4a4a"></div>
<div class="a" style="left:397px;top:245px;width:1px;height:2px;background:#4a4a4a"></div>
<div class="a" style="left:403px;top:243px;width:1px;height:6px;background:#4a4a4a"></div>
<div class="a" style="left:408px;top:245px;width:1px;height:2px;background:#4a4a4a"></div>
<div class="a" style="left:414px;top:243px;width:1px;height:6px;background:#4a4a4a"></div>
<div class="a" style="left:419px;top:245px;width:1px;height:2px;background:#4a4a4a"></div>
<div class="a" style="left:431px;top:245px;width:1px;height:2px;background:#4a4a4a"></div>
<div class="a" style="left:436px;top:243px;width:1px;height:6px;background:#4a4a4a"></div>
<div class="a" style="left:442px;top:245px;width:1px;height:2px;background:#4a4a4a"></div>
<div class="a" style="left:447px;top:243px;width:1px;height:6px;background:#4a4a4a"></div>
<div class="a" style="left:453px;top:245px;width:1px;height:2px;background:#4a4a4a"></div>
<div class="a" style="left:458px;top:243px;width:1px;height:6px;background:#4a4a4a"></div>
<div class="a" style="left:464px;top:245px;width:1px;height:2px;background:#4a4a4a"></div>
<div class="a" style="left:475px;top:245px;width:1px;height:2px;background:#4a4a4a"></div>
<div class="a" style="left:480px;top:243px;width:1px;height:6px;background:#4a4a4a"></div>
<div class="a" style="left:486px;top:245px;width:1px;height:2px;background:#4a4a4a"></div>
<div class="a" style="left:492px;top:243px;width:1px;height:6px;background:#4a4a4a"></div>
<div class="a" style="left:497px;top:245px;width:1px;height:2px;background:#4a4a4a"></div>
<div class="a" style="left:503px;top:243px;width:1px;height:6px;background:#4a4a4a"></div>
<div class="a" style="left:508px;top:245px;width:1px;height:2px;background:#4a4a4a"></div>
<div class="a" style="left:519px;top:245px;width:1px;height:2px;background:#4a4a4a"></div>
<div class="a" style="left:525px;top:243px;width:1px;height:6px;background:#4a4a4a"></div>
<div class="a" style="left:530px;top:245px;width:1px;height:2px;background:#4a4a4a"></div>
<div class="a" style="left:536px;top:243px;width:1px;height:6px;background:#4a4a4a"></div>
<div class="a" style="left:542px;top:245px;width:1px;height:2px;background:#4a4a4a"></div>
<div class="a" style="left:547px;top:243px;width:1px;height:6px;background:#4a4a4a"></div>
<div class="a" style="left:553px;top:245px;width:1px;height:2px;background:#4a4a4a"></div>
<div class="a" style="left:564px;top:245px;width:1px;height:2px;background:#4a4a4a"></div>
<div class="a" style="left:569px;top:243px;width:1px;height:6px;background:#4a4a4a"></div>
<div class="a" style="left:575px;top:245px;width:1px;height:2px;background:#4a4a4a"></div>
<div class="a" style="left:580px;top:243px;width:1px;height:6px;background:#4a4a4a"></div>
<div class="a" style="left:586px;top:245px;width:1px;height:2px;background:#4a4a4a"></div>
<div class="a" style="left:592px;top:243px;width:1px;height:6px;background:#4a4a4a"></div>
<div class="a" style="left:597px;top:245px;width:1px;height:2px;background:#4a4a4a"></div>
<div class="a" style="left:608px;top:245px;width:1px;height:2px;background:#4a4a4a"></div>
<div class="a" style="left:614px;top:243px;width:1px;height:6px;background:#4a4a4a"></div>
<div class="a" style="left:619px;top:245px;width:1px;height:2px;background:#4a4a4a"></div>
<div class="a" style="left:625px;top:243px;width:1px;height:6px;background:#4a4a4a"></div>
<div class="a" style="left:630px;top:245px;width:1px;height:2px;background:#4a4a4a"></div>
<div class="a" style="left:636px;top:243px;width:1px;height:6px;background:#4a4a4a"></div>
<div class="a" style="left:641px;top:245px;width:1px;height:2px;background:#4a4a4a"></div>
<div class="a" style="left:653px;top:245px;width:1px;height:2px;background:#4a4a4a"></div>
<div class="a" style="left:658px;top:243px;width:1px;height:6px;background:#4a4a4a"></div>
<div class="a" style="left:664px;top:245px;width:1px;height:2px;background:#4a4a4a"></div>
<div class="a" style="left:669px;top:243px;width:1px;height:6px;background:#4a4a4a"></div>
<div class="a" style="left:675px;top:245px;width:1px;height:2px;background:#4a4a4a"></div>
<div class="a" style="left:680px;top:243px;width:1px;height:6px;background:#4a4a4a"></div>
<div class="a" style="left:686px;top:245px;width:1px;height:2px;background:#4a4a4a"></div>
<div class="a" style="left:697px;top:245px;width:1px;height:2px;background:#4a4a4a"></div>
<div class="a" style="left:702px;top:243px;width:1px;height:6px;background:#4a4a4a"></div>
<div class="a" style="left:708px;top:245px;width:1px;height:2px;background:#4a4a4a"></div>
<div class="a" style="left:714px;top:243px;width:1px;height:6px;background:#4a4a4a"></div>
<div class="a" style="left:719px;top:245px;width:1px;height:2px;background:#4a4a4a"></div>
<div class="a" style="left:725px;top:243px;width:1px;height:6px;background:#4a4a4a"></div>
<div class="a" style="left:730px;top:245px;width:1px;height:2px;background:#4a4a4a"></div>
<div class="a" style="left:741px;top:245px;width:1px;height:2px;background:#4a4a4a"></div>
<div class="a" style="left:747px;top:243px;width:1px;height:6px;background:#4a4a4a"></div>
<div class="a" style="left:752px;top:245px;width:1px;height:2px;background:#4a4a4a"></div>
<div class="a" style="left:758px;top:243px;width:1px;height:6px;background:#4a4a4a"></div>
<div class="a" style="left:764px;top:245px;width:1px;height:2px;background:#4a4a4a"></div>
<div class="a" style="left:769px;top:243px;width:1px;height:6px;background:#4a4a4a"></div>
<div class="a" style="left:775px;top:245px;width:1px;height:2px;background:#4a4a4a"></div>
<div class="a" style="left:786px;top:245px;width:1px;height:2px;background:#4a4a4a"></div>
<div class="a" style="left:791px;top:243px;width:1px;height:6px;background:#4a4a4a"></div>
<div class="a" style="left:797px;top:245px;width:1px;height:2px;background:#4a4a4a"></div>
<div class="a" style="left:802px;top:243px;width:1px;height:6px;background:#4a4a4a"></div>
<div class="a" style="left:808px;top:245px;width:1px;height:2px;background:#4a4a4a"></div>
<div class="a" style="left:814px;top:243px;width:1px;height:6px;background:#4a4a4a"></div>
<div class="a" style="left:819px;top:245px;width:1px;height:2px;background:#4a4a4a"></div>
<div class="a" style="left:830px;top:245px;width:1px;height:2px;background:#4a4a4a"></div>
<div class="a" style="left:836px;top:243px;width:1px;height:6px;background:#4a4a4a"></div>
<div class="a" style="left:841px;top:245px;width:1px;height:2px;background:#4a4a4a"></div>
<div class="a" style="left:847px;top:243px;width:1px;height:6px;background:#4a4a4a"></div>
<div class="a" style="left:852px;top:245px;width:1px;height:2px;background:#4a4a4a"></div>
<div class="a" style="left:858px;top:243px;width:1px;height:6px;background:#4a4a4a"></div>
<div class="a" style="left:863px;top:245px;width:1px;height:2px;background:#4a4a4a"></div>
<div class="a" style="left:875px;top:245px;width:1px;height:2px;background:#4a4a4a"></div>
<div class="a" style="left:880px;top:243px;width:1px;height:6px;background:#4a4a4a"></div>
<div class="a" style="left:886px;top:245px;width:1px;height:2px;background:#4a4a4a"></div>
<div class="a" style="left:891px;top:243px;width:1px;height:6px;background:#4a4a4a"></div>
<div class="a" style="left:897px;top:245px;width:1px;height:2px;background:#4a4a4a"></div>
<div class="a" style="left:902px;top:243px;width:1px;height:6px;background:#4a4a4a"></div>
<div class="a" style="left:908px;top:245px;width:1px;height:2px;background:#4a4a4a"></div>
<div class="a" style="left:919px;top:245px;width:1px;height:2px;background:#4a4a4a"></div>
<div class="a" style="left:924px;top:243px;width:1px;height:6px;background:#4a4a4a"></div>
<div class="a" style="left:930px;top:245px;width:1px;height:2px;background:#4a4a4a"></div>
<div class="a" style="left:936px;top:243px;width:1px;height:6px;background:#4a4a4a"></div>
<div class="a" style="left:941px;top:245px;width:1px;height:2px;background:#4a4a4a"></div>
<div class="a" style="left:947px;top:243px;width:1px;height:6px;background:#4a4a4a"></div>
<div class="a" style="left:952px;top:245px;width:1px;height:2px;background:#4a4a4a"></div>
<div class="a" style="left:963px;top:245px;width:1px;height:2px;background:#4a4a4a"></div>
<div class="a" style="left:969px;top:243px;width:1px;height:6px;background:#4a4a4a"></div>
<div class="a" style="left:974px;top:245px;width:1px;height:2px;background:#4a4a4a"></div>
<div class="a" style="left:980px;top:243px;width:1px;height:6px;background:#4a4a4a"></div>
<div class="a" style="left:986px;top:245px;width:1px;height:2px;background:#4a4a4a"></div>
<div class="a" style="left:991px;top:243px;width:1px;height:6px;background:#4a4a4a"></div>
<div class="a" style="left:997px;top:245px;width:1px;height:2px;background:#4a4a4a"></div>
<div class="a" style="left:1008px;top:245px;width:1px;height:2px;background:#4a4a4a"></div>
<div class="a" style="left:1013px;top:243px;width:1px;height:6px;background:#4a4a4a"></div>
<div class="a" style="left:1019px;top:245px;width:1px;height:2px;background:#4a4a4a"></div>
<div class="a" style="left:1024px;top:243px;width:1px;height:6px;background:#4a4a4a"></div>
<div class="a" style="left:1030px;top:245px;width:1px;height:2px;background:#4a4a4a"></div>
<div class="a" style="left:1036px;top:243px;width:1px;height:6px;background:#4a4a4a"></div>
<div class="a" style="left:1041px;top:245px;width:1px;height:2px;background:#4a4a4a"></div>
<div class="a" style="left:1052px;top:245px;width:1px;height:2px;background:#4a4a4a"></div>
<div class="a" style="left:1058px;top:243px;width:1px;height:6px;background:#4a4a4a"></div>
<div class="a" style="left:1063px;top:245px;width:1px;height:2px;background:#4a4a4a"></div>
<div class="a" style="left:1069px;top:243px;width:1px;height:6px;background:#4a4a4a"></div>
<div class="a" style="left:1074px;top:245px;width:1px;height:2px;background:#4a4a4a"></div>
<div class="a" style="left:1080px;top:243px;width:1px;height:6px;background:#4a4a4a"></div>
<div class="a" style="left:1085px;top:245px;width:1px;height:2px;background:#4a4a4a"></div>
<div class="a" style="left:1097px;top:245px;width:1px;height:2px;background:#4a4a4a"></div>
<div class="a" style="left:1102px;top:243px;width:1px;height:6px;background:#4a4a4a"></div>
<div class="a" style="left:1108px;top:245px;width:1px;height:2px;background:#4a4a4a"></div>
<span id="t46" class="a tx " style="left:374.60px;transform:scaleX(1.1183);top:242.46px;font-size:9.5px;line-height:9.5px;color:#3a3a3a;font-weight:normal;font-family:'Liberation Sans',sans-serif;">16</span>
<span id="t47" class="a tx " style="left:419.00px;transform:scaleX(1.1183);top:242.46px;font-size:9.5px;line-height:9.5px;color:#3a3a3a;font-weight:normal;font-family:'Liberation Sans',sans-serif;">14</span>
<span id="t48" class="a tx " style="left:463.40px;transform:scaleX(1.1183);top:242.46px;font-size:9.5px;line-height:9.5px;color:#3a3a3a;font-weight:normal;font-family:'Liberation Sans',sans-serif;">12</span>
<span id="t49" class="a tx " style="left:507.80px;transform:scaleX(1.1183);top:242.46px;font-size:9.5px;line-height:9.5px;color:#3a3a3a;font-weight:normal;font-family:'Liberation Sans',sans-serif;">10</span>
<span id="t50" class="a tx " style="left:555.20px;transform:scaleX(1.1000);top:242.46px;font-size:9.5px;line-height:9.5px;color:#3a3a3a;font-weight:normal;font-family:'Liberation Sans',sans-serif;">8</span>
<span id="t51" class="a tx " style="left:599.60px;transform:scaleX(1.1000);top:242.46px;font-size:9.5px;line-height:9.5px;color:#3a3a3a;font-weight:normal;font-family:'Liberation Sans',sans-serif;">6</span>
<span id="t52" class="a tx " style="left:644.00px;transform:scaleX(1.1000);top:242.46px;font-size:9.5px;line-height:9.5px;color:#3a3a3a;font-weight:normal;font-family:'Liberation Sans',sans-serif;">4</span>
<span id="t53" class="a tx " style="left:688.40px;transform:scaleX(1.1000);top:242.46px;font-size:9.5px;line-height:9.5px;color:#3a3a3a;font-weight:normal;font-family:'Liberation Sans',sans-serif;">2</span>
<span id="t54" class="a tx " style="left:732.80px;transform:scaleX(1.1000);top:242.46px;font-size:9.5px;line-height:9.5px;color:#3a3a3a;font-weight:normal;font-family:'Liberation Sans',sans-serif;">0</span>
<span id="t55" class="a tx " style="left:777.20px;transform:scaleX(1.1000);top:242.46px;font-size:9.5px;line-height:9.5px;color:#3a3a3a;font-weight:normal;font-family:'Liberation Sans',sans-serif;">2</span>
<span id="t56" class="a tx " style="left:821.60px;transform:scaleX(1.1000);top:242.46px;font-size:9.5px;line-height:9.5px;color:#3a3a3a;font-weight:normal;font-family:'Liberation Sans',sans-serif;">4</span>
<span id="t57" class="a tx " style="left:866.00px;transform:scaleX(1.1000);top:242.46px;font-size:9.5px;line-height:9.5px;color:#3a3a3a;font-weight:normal;font-family:'Liberation Sans',sans-serif;">6</span>
<span id="t58" class="a tx " style="left:910.40px;transform:scaleX(1.1000);top:242.46px;font-size:9.5px;line-height:9.5px;color:#3a3a3a;font-weight:normal;font-family:'Liberation Sans',sans-serif;">8</span>
<span id="t59" class="a tx " style="left:951.80px;transform:scaleX(1.1183);top:242.46px;font-size:9.5px;line-height:9.5px;color:#3a3a3a;font-weight:normal;font-family:'Liberation Sans',sans-serif;">10</span>
<span id="t60" class="a tx " style="left:996.20px;transform:scaleX(1.1183);top:242.46px;font-size:9.5px;line-height:9.5px;color:#3a3a3a;font-weight:normal;font-family:'Liberation Sans',sans-serif;">12</span>
<span id="t61" class="a tx " style="left:1040.60px;transform:scaleX(1.1183);top:242.46px;font-size:9.5px;line-height:9.5px;color:#3a3a3a;font-weight:normal;font-family:'Liberation Sans',sans-serif;">14</span>
<span id="t62" class="a tx " style="left:1085.00px;transform:scaleX(1.1183);top:242.46px;font-size:9.5px;line-height:9.5px;color:#3a3a3a;font-weight:normal;font-family:'Liberation Sans',sans-serif;">16</span>
<div class="a" style="left:199px;top:278px;width:14px;height:422px;background:#fff"></div>
<div class="a" style="left:205px;top:284px;width:2px;height:1px;background:#4a4a4a"></div>
<div class="a" style="left:203px;top:289px;width:6px;height:1px;background:#4a4a4a"></div>
<div class="a" style="left:205px;top:295px;width:2px;height:1px;background:#4a4a4a"></div>
<div class="a" style="left:203px;top:300px;width:6px;height:1px;background:#4a4a4a"></div>
<div class="a" style="left:205px;top:306px;width:2px;height:1px;background:#4a4a4a"></div>
<div class="a" style="left:205px;top:317px;width:2px;height:1px;background:#4a4a4a"></div>
<div class="a" style="left:203px;top:322px;width:6px;height:1px;background:#4a4a4a"></div>
<div class="a" style="left:205px;top:328px;width:2px;height:1px;background:#4a4a4a"></div>
<div class="a" style="left:203px;top:334px;width:6px;height:1px;background:#4a4a4a"></div>
<div class="a" style="left:205px;top:339px;width:2px;height:1px;background:#4a4a4a"></div>
<div class="a" style="left:203px;top:345px;width:6px;height:1px;background:#4a4a4a"></div>
<div class="a" style="left:205px;top:350px;width:2px;height:1px;background:#4a4a4a"></div>
<div class="a" style="left:205px;top:361px;width:2px;height:1px;background:#4a4a4a"></div>
<div class="a" style="left:203px;top:367px;width:6px;height:1px;background:#4a4a4a"></div>
<div class="a" style="left:205px;top:372px;width:2px;height:1px;background:#4a4a4a"></div>
<div class="a" style="left:203px;top:378px;width:6px;height:1px;background:#4a4a4a"></div>
<div class="a" style="left:205px;top:384px;width:2px;height:1px;background:#4a4a4a"></div>
<div class="a" style="left:203px;top:389px;width:6px;height:1px;background:#4a4a4a"></div>
<div class="a" style="left:205px;top:395px;width:2px;height:1px;background:#4a4a4a"></div>
<div class="a" style="left:205px;top:406px;width:2px;height:1px;background:#4a4a4a"></div>
<div class="a" style="left:203px;top:411px;width:6px;height:1px;background:#4a4a4a"></div>
<div class="a" style="left:205px;top:417px;width:2px;height:1px;background:#4a4a4a"></div>
<div class="a" style="left:203px;top:422px;width:6px;height:1px;background:#4a4a4a"></div>
<div class="a" style="left:205px;top:428px;width:2px;height:1px;background:#4a4a4a"></div>
<div class="a" style="left:203px;top:434px;width:6px;height:1px;background:#4a4a4a"></div>
<div class="a" style="left:205px;top:439px;width:2px;height:1px;background:#4a4a4a"></div>
<div class="a" style="left:205px;top:450px;width:2px;height:1px;background:#4a4a4a"></div>
<div class="a" style="left:203px;top:456px;width:6px;height:1px;background:#4a4a4a"></div>
<div class="a" style="left:205px;top:461px;width:2px;height:1px;background:#4a4a4a"></div>
<div class="a" style="left:203px;top:467px;width:6px;height:1px;background:#4a4a4a"></div>
<div class="a" style="left:205px;top:472px;width:2px;height:1px;background:#4a4a4a"></div>
<div class="a" style="left:203px;top:478px;width:6px;height:1px;background:#4a4a4a"></div>
<div class="a" style="left:205px;top:483px;width:2px;height:1px;background:#4a4a4a"></div>
<div class="a" style="left:205px;top:495px;width:2px;height:1px;background:#4a4a4a"></div>
<div class="a" style="left:203px;top:500px;width:6px;height:1px;background:#4a4a4a"></div>
<div class="a" style="left:205px;top:506px;width:2px;height:1px;background:#4a4a4a"></div>
<div class="a" style="left:203px;top:511px;width:6px;height:1px;background:#4a4a4a"></div>
<div class="a" style="left:205px;top:517px;width:2px;height:1px;background:#4a4a4a"></div>
<div class="a" style="left:203px;top:522px;width:6px;height:1px;background:#4a4a4a"></div>
<div class="a" style="left:205px;top:528px;width:2px;height:1px;background:#4a4a4a"></div>
<div class="a" style="left:205px;top:539px;width:2px;height:1px;background:#4a4a4a"></div>
<div class="a" style="left:203px;top:544px;width:6px;height:1px;background:#4a4a4a"></div>
<div class="a" style="left:205px;top:550px;width:2px;height:1px;background:#4a4a4a"></div>
<div class="a" style="left:203px;top:556px;width:6px;height:1px;background:#4a4a4a"></div>
<div class="a" style="left:205px;top:561px;width:2px;height:1px;background:#4a4a4a"></div>
<div class="a" style="left:203px;top:567px;width:6px;height:1px;background:#4a4a4a"></div>
<div class="a" style="left:205px;top:572px;width:2px;height:1px;background:#4a4a4a"></div>
<div class="a" style="left:205px;top:583px;width:2px;height:1px;background:#4a4a4a"></div>
<div class="a" style="left:203px;top:589px;width:6px;height:1px;background:#4a4a4a"></div>
<div class="a" style="left:205px;top:594px;width:2px;height:1px;background:#4a4a4a"></div>
<div class="a" style="left:203px;top:600px;width:6px;height:1px;background:#4a4a4a"></div>
<div class="a" style="left:205px;top:606px;width:2px;height:1px;background:#4a4a4a"></div>
<div class="a" style="left:203px;top:611px;width:6px;height:1px;background:#4a4a4a"></div>
<div class="a" style="left:205px;top:617px;width:2px;height:1px;background:#4a4a4a"></div>
<div class="a" style="left:205px;top:628px;width:2px;height:1px;background:#4a4a4a"></div>
<div class="a" style="left:203px;top:633px;width:6px;height:1px;background:#4a4a4a"></div>
<div class="a" style="left:205px;top:639px;width:2px;height:1px;background:#4a4a4a"></div>
<div class="a" style="left:203px;top:644px;width:6px;height:1px;background:#4a4a4a"></div>
<div class="a" style="left:205px;top:650px;width:2px;height:1px;background:#4a4a4a"></div>
<div class="a" style="left:203px;top:656px;width:6px;height:1px;background:#4a4a4a"></div>
<div class="a" style="left:205px;top:661px;width:2px;height:1px;background:#4a4a4a"></div>
<div class="a" style="left:205px;top:672px;width:2px;height:1px;background:#4a4a4a"></div>
<div class="a" style="left:203px;top:678px;width:6px;height:1px;background:#4a4a4a"></div>
<div class="a" style="left:205px;top:683px;width:2px;height:1px;background:#4a4a4a"></div>
<div class="a" style="left:203px;top:689px;width:6px;height:1px;background:#4a4a4a"></div>
<div class="a" style="left:205px;top:694px;width:2px;height:1px;background:#4a4a4a"></div>
<span class="a" style="left:200px;top:305.4px;width:12px;height:12px;font:9.5px/12px 'Liberation Sans';color:#3a3a3a;text-align:center;transform:rotate(-90deg)">8</span>
<span class="a" style="left:200px;top:349.8px;width:12px;height:12px;font:9.5px/12px 'Liberation Sans';color:#3a3a3a;text-align:center;transform:rotate(-90deg)">6</span>
<span class="a" style="left:200px;top:394.2px;width:12px;height:12px;font:9.5px/12px 'Liberation Sans';color:#3a3a3a;text-align:center;transform:rotate(-90deg)">4</span>
<span class="a" style="left:200px;top:438.6px;width:12px;height:12px;font:9.5px/12px 'Liberation Sans';color:#3a3a3a;text-align:center;transform:rotate(-90deg)">2</span>
<span class="a" style="left:200px;top:483.0px;width:12px;height:12px;font:9.5px/12px 'Liberation Sans';color:#3a3a3a;text-align:center;transform:rotate(-90deg)">0</span>
<span class="a" style="left:200px;top:527.4px;width:12px;height:12px;font:9.5px/12px 'Liberation Sans';color:#3a3a3a;text-align:center;transform:rotate(-90deg)">2</span>
<span class="a" style="left:200px;top:571.8px;width:12px;height:12px;font:9.5px/12px 'Liberation Sans';color:#3a3a3a;text-align:center;transform:rotate(-90deg)">4</span>
<span class="a" style="left:200px;top:616.2px;width:12px;height:12px;font:9.5px/12px 'Liberation Sans';color:#3a3a3a;text-align:center;transform:rotate(-90deg)">6</span>
<span class="a" style="left:200px;top:660.6px;width:12px;height:12px;font:9.5px/12px 'Liberation Sans';color:#3a3a3a;text-align:center;transform:rotate(-90deg)">8</span>
<div class="a" style="left:195px;top:717px;width:1071px;height:5px;background:linear-gradient(180deg,#c9ddf7,#a9c7f0);border-top:1px solid #dbe8fa"></div>
<div class="a" style="left:195px;top:722px;width:1056px;height:35px;background:#fff;border-left:1px solid #9ab8e2"></div>
<div class="a" style="left:1251px;top:722px;width:15px;height:35px;background:linear-gradient(90deg,#98b2dc,#8aa6d4)"></div>
<svg class="a" style="left:1256px;top:726px;" width="6" height="6" viewBox="0 0 6 6"><path d="M0 6 L6 0 V6z" fill="#7e98c2"/></svg>
<svg class="a" style="left:1256px;top:748px;" width="6" height="6" viewBox="0 0 6 6"><path d="M0 0 H6 L0 6z" fill="#7e98c2"/></svg>
<span id="t63" class="a tx " style="left:203.70px;transform:scaleX(1.0371);top:730.15px;font-size:14px;line-height:14px;color:#1a1a1a;font-weight:normal;font-family:'Liberation Sans',sans-serif;">Заметки к слайду</span>
<div class="a" style="left:6px;top:757px;width:1260px;height:20px;background:linear-gradient(180deg,#d3e3f7 0,#c5d9f3 45%,#b8cff0 55%,#c0d5f2 100%);border-top:1px solid #9ab8e2"></div>
<span id="t64" class="a tx " style="left:13.50px;transform:scaleX(0.9497);top:762.11px;font-size:10.5px;line-height:10.5px;color:#1f3d6e;font-weight:normal;font-family:'Liberation Sans',sans-serif;">Слайд 1 из 37</span>
<div class="a" style="left:86px;top:760px;width:1px;height:15px;background:#9ab4d8;box-shadow:1px 0 0 #eef4fc"></div>
<span id="t65" class="a tx " style="left:96.40px;transform:scaleX(0.9886);top:762.11px;font-size:10.5px;line-height:10.5px;color:#1f3d6e;font-weight:normal;font-family:'Liberation Sans',sans-serif;">"Солнцестояние"</span>
<div class="a" style="left:187px;top:760px;width:1px;height:15px;background:#9ab4d8;box-shadow:1px 0 0 #eef4fc"></div>
<span id="t66" class="a tx " style="left:196.30px;transform:scaleX(0.9504);top:762.11px;font-size:10.5px;line-height:10.5px;color:#1f3d6e;font-weight:normal;font-family:'Liberation Sans',sans-serif;">Русский (Россия)</span>
<div class="a" style="left:283px;top:760px;width:1px;height:15px;background:#9ab4d8;box-shadow:1px 0 0 #eef4fc"></div>
<div class="a" style="left:1023px;top:758px;width:243px;height:19px;background:linear-gradient(180deg,#c0d2ec,#9fb9e0 50%,#8aa8d8 100%)"></div>
<div class="a" style="left:1028px;top:759px;width:52px;height:16px;border:1px solid #a8bedd;border-radius:2px;background:linear-gradient(180deg,#e4eefa,#c8daf2)"></div>
<svg class="a" style="left:1032px;top:761px;" width="12" height="12" viewBox="0 0 12 12"><rect x="0.5" y="0.5" width="11" height="11" fill="#fff" stroke="#2c3a50"/><rect x="2" y="2" width="3" height="8" fill="#2c3a50"/><rect x="6" y="2" width="4" height="4" fill="none" stroke="#2c3a50"/></svg>
<svg class="a" style="left:1048px;top:761px;" width="12" height="12" viewBox="0 0 12 12"><rect x="0.5" y="1.5" width="4.5" height="3.5" fill="none" stroke="#2c3a50"/><rect x="7" y="1.5" width="4.5" height="3.5" fill="none" stroke="#2c3a50"/><rect x="0.5" y="7" width="4.5" height="3.5" fill="none" stroke="#2c3a50"/><rect x="7" y="7" width="4.5" height="3.5" fill="none" stroke="#2c3a50"/></svg>
<svg class="a" style="left:1065px;top:761px;" width="12" height="12" viewBox="0 0 12 12"><rect x="0.5" y="0.5" width="11" height="2" fill="#2c3a50"/><rect x="1.5" y="2.5" width="9" height="5" fill="#fff" stroke="#2c3a50"/><rect x="5.5" y="7.5" width="1" height="3" fill="#2c3a50"/><rect x="3" y="10.5" width="6" height="1" fill="#2c3a50"/></svg>
<span id="t67" class="a tx " style="left:1087.00px;transform:scaleX(0.9188);top:762.11px;font-size:10.5px;line-height:10.5px;color:#1f3d6e;font-weight:normal;font-family:'Liberation Sans',sans-serif;">64%</span>
<svg class="a" style="left:1113px;top:758px;" width="18" height="18" viewBox="0 0 18 18"><circle cx="9" cy="9" r="7" fill="#e8eef6" stroke="#8a9ab0"/><rect x="5" y="8" width="8" height="2.2" fill="#2c3a50"/></svg>
<div class="a" style="left:1131px;top:766px;width:82px;height:1px;background:#6c84a8;box-shadow:0 1px 0 #dfe8f5"></div>
<div class="a" style="left:1175px;top:763px;width:1px;height:6px;background:#8aa0c0"></div>
<svg class="a" style="left:1152px;top:758px;" width="12" height="16" viewBox="0 0 12 16"><path d="M1.5 1.5 H10.5 V10 L6 14.5 L1.5 10z" fill="#e8eef6" stroke="#6a7e9c"/><rect x="5.5" y="4" width="1" height="6" fill="#9aaac0"/></svg>
<svg class="a" style="left:1222px;top:758px;" width="18" height="18" viewBox="0 0 18 18"><circle cx="9" cy="9" r="7" fill="#e8eef6" stroke="#8a9ab0"/><rect x="5" y="8" width="8" height="2.2" fill="#2c3a50"/><rect x="7.9" y="5" width="2.2" height="8" fill="#2c3a50"/></svg>
<svg class="a" style="left:1245px;top:759px;" width="16" height="16" viewBox="0 0 16 16"><rect x="0.5" y="0.5" width="14" height="14" fill="#f4f7fb" stroke="#a8b8d0"/><path d="M7.5 2 V6 M7.5 9 V13 M2 7.5 H6 M9 7.5 H13" stroke="#2c3a50" stroke-width="1.2"/><path d="M5.5 4 L7.5 6.5 L9.5 4z M5.5 11 L7.5 8.5 L9.5 11z M4 5.5 L6.5 7.5 L4 9.5z M11 5.5 L8.5 7.5 L11 9.5z" fill="#2c3a50"/></svg>
<div class="a" style="left:363px;top:281px;width:751px;height:423px;background:rgba(20,35,70,.55);filter:blur(2px)"></div>
<div class="a" style="left:361px;top:278px;width:750px;height:422px;background:#fff"></div>
<div class="a" style="left:361px;top:278px;width:83px;height:422px;background:linear-gradient(90deg,#eedcb6 0,#f0e0bd 60%,#ecdab2 100%);box-shadow:inset -1px 0 0 rgba(200,180,130,.35)"></div>
<svg class="a" style="left:361px;top:278px;" width="83" height="422" viewBox="0 0 83 422"><defs><clipPath id="bc"><rect x="0" y="0" width="83" height="422"/></clipPath>
      <pattern id="hatch" width="4" height="4" patternUnits="userSpaceOnUse"><path d="M0 4 L4 0" stroke="rgba(255,255,255,.18)" stroke-width="1"/></pattern></defs>
      <g clip-path="url(#bc)">
      <rect width="83" height="422" fill="url(#hatch)" opacity=".5"/>
      <path d="M0 0 H72 C62 22 40 44 0 50z" fill="rgba(255,250,235,.45)" stroke="#d8c6a0" stroke-width=".7"/>
      <g transform="rotate(25 78 101)">
      <ellipse cx="78" cy="101" rx="59" ry="31" fill="none" stroke="#e8d8b2" stroke-width="7"/>
      <ellipse cx="78" cy="101" rx="62.5" ry="34.5" fill="none" stroke="#dac89c" stroke-width="0.9"/>
      <ellipse cx="78" cy="101" rx="55.5" ry="27.5" fill="none" stroke="#c8b27e" stroke-width="1.1"/>
      </g>
      <ellipse cx="87" cy="56" rx="72" ry="52" fill="none" stroke="#cfbd92" stroke-width="1.2"/>
      <ellipse cx="85" cy="54" rx="71" ry="51" fill="none" stroke="#fbf3e0" stroke-width="1.7"/>
      </g></svg>
<span id="t68" class="a tx " style="left:485.50px;transform:scaleX(0.9930);top:314.61px;font-size:33px;line-height:33px;color:#4e1d12;font-weight:normal;font-family:'Liberation Serif',sans-serif;">Күн тәртібінде:</span>
<div class="a" style="left:479px;top:353px;width:514px;height:304px;border:1.5px solid #2a2a2a"></div>
<div class="a" style="left:845px;top:353px;width:1.2px;height:304px;background:#333"></div>
<span id="t69" class="a tx " style="left:482.72px;transform:scaleX(1.0304);top:357.76px;font-size:17px;line-height:17px;color:#000;font-weight:normal;font-family:'Liberation Serif',sans-serif;-webkit-text-stroke:0.25px #000;">1.</span>
<span id="t70" class="a tx " style="left:511.90px;transform:scaleX(1.0624);top:357.76px;font-size:17px;line-height:17px;color:#000;font-weight:normal;font-family:'Liberation Serif',sans-serif;-webkit-text-stroke:0.25px #000;">Алғы сөз</span>
<span id="t71" class="a tx " style="left:483.75px;transform:scaleX(0.9800);top:381.51px;font-size:17px;line-height:17px;color:#000;font-weight:normal;font-family:'Liberation Serif',sans-serif;-webkit-text-stroke:0.25px #000;">2.</span>
<span id="t72" class="a tx " style="left:500.60px;transform:scaleX(0.8167);top:381.51px;font-size:17px;line-height:17px;color:#000;font-weight:normal;font-family:'Liberation Serif',sans-serif;-webkit-text-stroke:0.25px #000;">І</span>
<span id="t73" class="a tx " style="left:512.50px;transform:scaleX(1.0859);top:381.51px;font-size:17px;line-height:17px;color:#000;font-weight:normal;font-family:'Liberation Serif',sans-serif;-webkit-text-stroke:0.25px #000;">тоқсаннын қорытындысы</span>
<span id="t74" class="a tx " style="left:483.75px;transform:scaleX(0.9800);top:405.01px;font-size:17px;line-height:17px;color:#000;font-weight:normal;font-family:'Liberation Serif',sans-serif;-webkit-text-stroke:0.25px #000;">3.</span>
<span id="t75" class="a tx " style="left:527.50px;transform:scaleX(1.1149);top:405.01px;font-size:17px;line-height:17px;color:#000;font-weight:normal;font-family:'Liberation Serif',sans-serif;-webkit-text-stroke:0.25px #000;">Мектепте</span>
<span id="t76" class="a tx " style="left:635.60px;transform:scaleX(1.0804);top:405.01px;font-size:17px;line-height:17px;color:#000;font-weight:normal;font-family:'Liberation Serif',sans-serif;-webkit-text-stroke:0.25px #000;">қашықтықтан</span>
<span id="t77" class="a tx " style="left:775.40px;transform:scaleX(1.0746);top:405.01px;font-size:17px;line-height:17px;color:#000;font-weight:normal;font-family:'Liberation Serif',sans-serif;-webkit-text-stroke:0.25px #000;">оқытуда</span>
<span id="t78" class="a tx " style="left:483.75px;transform:scaleX(1.0849);top:429.26px;font-size:17px;line-height:17px;color:#000;font-weight:normal;font-family:'Liberation Serif',sans-serif;-webkit-text-stroke:0.25px #000;">пайдаланатын білім беру</span>
<span id="t79" class="a tx " style="left:483.75px;transform:scaleX(1.1051);top:453.26px;font-size:17px;line-height:17px;color:#000;font-weight:normal;font-family:'Liberation Serif',sans-serif;-webkit-text-stroke:0.25px #000;">интернет-платформасынын</span>
<span id="t80" class="a tx " style="left:720.07px;transform:scaleX(1.0695);top:453.26px;font-size:17px;line-height:17px;color:#000;font-weight:normal;font-family:'Liberation Serif',sans-serif;-webkit-text-stroke:0.25px #000;">жұмыс</span>
<span id="t81" class="a tx " style="left:795.04px;transform:scaleX(1.0360);top:453.26px;font-size:17px;line-height:17px;color:#000;font-weight:normal;font-family:'Liberation Serif',sans-serif;-webkit-text-stroke:0.25px #000;">жасау</span>
<span id="t82" class="a tx " style="left:483.40px;transform:scaleX(1.0655);top:477.76px;font-size:17px;line-height:17px;color:#000;font-weight:normal;font-family:'Liberation Serif',sans-serif;-webkit-text-stroke:0.25px #000;">деңгейі</span>
<span id="t83" class="a tx " style="left:483.40px;transform:scaleX(1.0080);top:501.76px;font-size:17px;line-height:17px;color:#000;font-weight:normal;font-family:'Liberation Serif',sans-serif;-webkit-text-stroke:0.25px #000;">4.</span>
<span id="t84" class="a tx " style="left:503.38px;transform:scaleX(1.0153);top:501.76px;font-size:17px;line-height:17px;color:#000;font-weight:normal;font-family:'Liberation Serif',sans-serif;-webkit-text-stroke:0.25px #000;">1-4</span>
<span id="t85" class="a tx " style="left:535.00px;transform:scaleX(1.0783);top:501.76px;font-size:17px;line-height:17px;color:#000;font-weight:normal;font-family:'Liberation Serif',sans-serif;-webkit-text-stroke:0.25px #000;">кезекші</span>
<span id="t86" class="a tx " style="left:603.10px;transform:scaleX(1.0819);top:501.76px;font-size:17px;line-height:17px;color:#000;font-weight:normal;font-family:'Liberation Serif',sans-serif;-webkit-text-stroke:0.25px #000;">сыныптардың</span>
<span id="t87" class="a tx " style="left:721.65px;transform:scaleX(1.0462);top:501.76px;font-size:17px;line-height:17px;color:#000;font-weight:normal;font-family:'Liberation Serif',sans-serif;-webkit-text-stroke:0.25px #000;">жұмыс</span>
<span id="t88" class="a tx " style="left:782.25px;transform:scaleX(1.0969);top:501.76px;font-size:17px;line-height:17px;color:#000;font-weight:normal;font-family:'Liberation Serif',sans-serif;-webkit-text-stroke:0.25px #000;">режимі</span>
<span id="t89" class="a tx " style="left:484.47px;transform:scaleX(1.0745);top:525.76px;font-size:17px;line-height:17px;color:#000;font-weight:normal;font-family:'Liberation Serif',sans-serif;-webkit-text-stroke:0.25px #000;">және</span>
<span id="t90" class="a tx " style="left:534.03px;transform:scaleX(1.0306);top:525.76px;font-size:17px;line-height:17px;color:#000;font-weight:normal;font-family:'Liberation Serif',sans-serif;-webkit-text-stroke:0.25px #000;">жұмыс</span>
<span id="t91" class="a tx " style="left:598.00px;transform:scaleX(1.0860);top:525.76px;font-size:17px;line-height:17px;color:#000;font-weight:normal;font-family:'Liberation Serif',sans-serif;-webkit-text-stroke:0.25px #000;">істеу</span>
<span id="t92" class="a tx " style="left:648.00px;transform:scaleX(1.0948);top:525.76px;font-size:17px;line-height:17px;color:#000;font-weight:normal;font-family:'Liberation Serif',sans-serif;-webkit-text-stroke:0.25px #000;">қағидаларын</span>
<span id="t93" class="a tx " style="left:761.90px;transform:scaleX(1.0907);top:525.76px;font-size:17px;line-height:17px;color:#000;font-weight:normal;font-family:'Liberation Serif',sans-serif;-webkit-text-stroke:0.25px #000;">қатаңдату</span>
<span id="t94" class="a tx " style="left:483.40px;transform:scaleX(1.0578);top:549.26px;font-size:17px;line-height:17px;color:#000;font-weight:normal;font-family:'Liberation Serif',sans-serif;-webkit-text-stroke:0.25px #000;">шаралары</span>
<span id="t95" class="a tx " style="left:848.90px;transform:scaleX(1.0846);top:357.76px;font-size:17px;line-height:17px;color:#000;font-weight:normal;font-family:'Liberation Serif',sans-serif;-webkit-text-stroke:0.25px #000;">Э.М. Дакишева</span>
<span id="t96" class="a tx " style="left:853.40px;transform:scaleX(1.0747);top:381.51px;font-size:17px;line-height:17px;color:#000;font-weight:normal;font-family:'Liberation Serif',sans-serif;-webkit-text-stroke:0.25px #000;">Т.У.Ажгалиев</span>
<span id="t97" class="a tx " style="left:853.40px;transform:scaleX(1.0419);top:405.01px;font-size:17px;line-height:17px;color:#000;font-weight:normal;font-family:'Liberation Serif',sans-serif;-webkit-text-stroke:0.25px #000;">Ажгалиев&nbsp;&nbsp;Т.У.</span>
<span id="t98" class="a tx " style="left:848.90px;transform:scaleX(1.0803);top:429.26px;font-size:17px;line-height:17px;color:#000;font-weight:normal;font-family:'Liberation Serif',sans-serif;-webkit-text-stroke:0.25px #000;">Р.А. Утешева</span>
<span id="t99" class="a tx " style="left:848.90px;transform:scaleX(1.0838);top:501.76px;font-size:17px;line-height:17px;color:#000;font-weight:normal;font-family:'Liberation Serif',sans-serif;-webkit-text-stroke:0.25px #000;">Т.У. Ажгалиев</span>
<svg class="a" style="left:0;top:0;overflow:visible" width="1" height="1"><polyline points="483.0,470 484.5,471.4 486.0,470 487.5,471.4 489.0,470 490.5,471.4 492.0,470 493.5,471.4 495.0,470 496.5,471.4 498.0,470 499.5,471.4 501.0,470 502.5,471.4 504.0,470 505.5,471.4 507.0,470 508.5,471.4 510.0,470 511.5,471.4 513.0,470 514.5,471.4 516.0,470 517.5,471.4 519.0,470 520.5,471.4 522.0,470 523.5,471.4 525.0,470 526.5,471.4 528.0,470 529.5,471.4 531.0,470 532.5,471.4 534.0,470 535.5,471.4 537.0,470 538.5,471.4 540.0,470 541.5,471.4 543.0,470 544.5,471.4 546.0,470 547.5,471.4 549.0,470 550.5,471.4 552.0,470 553.5,471.4 555.0,470 556.5,471.4 558.0,470 559.5,471.4 561.0,470 562.5,471.4 564.0,470 565.5,471.4 567.0,470 568.5,471.4 570.0,470 571.5,471.4 573.0,470 574.5,471.4 576.0,470 577.5,471.4 579.0,470 580.5,471.4 582.0,470 583.5,471.4 585.0,470 586.5,471.4 588.0,470 589.5,471.4 591.0,470 592.5,471.4 594.0,470 595.5,471.4 597.0,470 598.5,471.4 600.0,470 601.5,471.4 603.0,470 604.5,471.4 606.0,470 607.5,471.4 609.0,470 610.5,471.4 612.0,470 613.5,471.4 615.0,470 616.5,471.4 618.0,470 619.5,471.4 621.0,470 622.5,471.4 624.0,470 625.5,471.4 627.0,470 628.5,471.4 630.0,470 631.5,471.4 633.0,470 634.5,471.4 636.0,470 637.5,471.4 639.0,470 640.5,471.4 642.0,470 643.5,471.4 645.0,470 646.5,471.4 648.0,470 649.5,471.4 651.0,470 652.5,471.4 654.0,470 655.5,471.4 657.0,470 658.5,471.4 660.0,470 661.5,471.4 663.0,470 664.5,471.4 666.0,470 667.5,471.4 669.0,470 670.5,471.4 672.0,470 673.5,471.4 675.0,470 676.5,471.4 678.0,470 679.5,471.4 681.0,470 682.5,471.4 684.0,470 685.5,471.4 687.0,470 688.5,471.4 690.0,470 691.5,471.4 693.0,470 694.5,471.4 696.0,470 697.5,471.4 699.0,470 700.5,471.4 702.0,470" fill="none" stroke="#d42a2a" stroke-width="0.6"/></svg>
<svg class="a" style="left:0;top:0;overflow:visible" width="1" height="1"><polyline points="890.0,374 891.5,375.4 893.0,374 894.5,375.4 896.0,374 897.5,375.4 899.0,374 900.5,375.4 902.0,374 903.5,375.4 905.0,374 906.5,375.4 908.0,374 909.5,375.4 911.0,374 912.5,375.4 914.0,374 915.5,375.4 917.0,374 918.5,375.4 920.0,374 921.5,375.4 923.0,374 924.5,375.4 926.0,374 927.5,375.4 929.0,374 930.5,375.4 932.0,374 933.5,375.4 935.0,374 936.5,375.4 938.0,374 939.5,375.4 941.0,374 942.5,375.4 944.0,374 945.5,375.4 947.0,374 948.5,375.4 950.0,374 951.5,375.4 953.0,374 954.5,375.4 956.0,374 957.5,375.4 959.0,374 960.5,375.4 962.0,374 963.5,375.4 965.0,374 966.5,375.4 968.0,374 969.5,375.4 971.0,374" fill="none" stroke="#d42a2a" stroke-width="0.6"/></svg>
<svg class="a" style="left:0;top:0;overflow:visible" width="1" height="1"><polyline points="881.0,398 882.5,399.4 884.0,398 885.5,399.4 887.0,398 888.5,399.4 890.0,398 891.5,399.4 893.0,398 894.5,399.4 896.0,398 897.5,399.4 899.0,398 900.5,399.4 902.0,398 903.5,399.4 905.0,398 906.5,399.4 908.0,398 909.5,399.4 911.0,398 912.5,399.4 914.0,398 915.5,399.4 917.0,398 918.5,399.4 920.0,398 921.5,399.4 923.0,398 924.5,399.4 926.0,398 927.5,399.4 929.0,398 930.5,399.4 932.0,398 933.5,399.4 935.0,398 936.5,399.4 938.0,398 939.5,399.4 941.0,398 942.5,399.4 944.0,398 945.5,399.4 947.0,398 948.5,399.4 950.0,398 951.5,399.4 953.0,398 954.5,399.4 956.0,398 957.5,399.4 959.0,398" fill="none" stroke="#d42a2a" stroke-width="0.6"/></svg>
<svg class="a" style="left:0;top:0;overflow:visible" width="1" height="1"><polyline points="853.0,422 854.5,423.4 856.0,422 857.5,423.4 859.0,422 860.5,423.4 862.0,422 863.5,423.4 865.0,422 866.5,423.4 868.0,422 869.5,423.4 871.0,422 872.5,423.4 874.0,422 875.5,423.4 877.0,422 878.5,423.4 880.0,422 881.5,423.4 883.0,422 884.5,423.4 886.0,422 887.5,423.4 889.0,422 890.5,423.4 892.0,422 893.5,423.4 895.0,422 896.5,423.4 898.0,422 899.5,423.4 901.0,422 902.5,423.4 904.0,422 905.5,423.4 907.0,422 908.5,423.4 910.0,422 911.5,423.4 913.0,422 914.5,423.4 916.0,422 917.5,423.4 919.0,422 920.5,423.4 922.0,422 923.5,423.4 925.0,422 926.5,423.4 928.0,422 929.5,423.4 931.0,422" fill="none" stroke="#d42a2a" stroke-width="0.6"/></svg>
<svg class="a" style="left:0;top:0;overflow:visible" width="1" height="1"><polyline points="884.0,446 885.5,447.4 887.0,446 888.5,447.4 890.0,446 891.5,447.4 893.0,446 894.5,447.4 896.0,446 897.5,447.4 899.0,446 900.5,447.4 902.0,446 903.5,447.4 905.0,446 906.5,447.4 908.0,446 909.5,447.4 911.0,446 912.5,447.4 914.0,446 915.5,447.4 917.0,446 918.5,447.4 920.0,446 921.5,447.4 923.0,446 924.5,447.4 926.0,446 927.5,447.4 929.0,446 930.5,447.4 932.0,446 933.5,447.4 935.0,446 936.5,447.4 938.0,446 939.5,447.4 941.0,446 942.5,447.4 944.0,446 945.5,447.4 947.0,446 948.5,447.4 950.0,446 951.5,447.4 953.0,446" fill="none" stroke="#d42a2a" stroke-width="0.6"/></svg>
<svg class="a" style="left:0;top:0;overflow:visible" width="1" height="1"><polyline points="882.0,518 883.5,519.4 885.0,518 886.5,519.4 888.0,518 889.5,519.4 891.0,518 892.5,519.4 894.0,518 895.5,519.4 897.0,518 898.5,519.4 900.0,518 901.5,519.4 903.0,518 904.5,519.4 906.0,518 907.5,519.4 909.0,518 910.5,519.4 912.0,518 913.5,519.4 915.0,518 916.5,519.4 918.0,518 919.5,519.4 921.0,518 922.5,519.4 924.0,518 925.5,519.4 927.0,518 928.5,519.4 930.0,518 931.5,519.4 933.0,518 934.5,519.4 936.0,518 937.5,519.4 939.0,518 940.5,519.4 942.0,518 943.5,519.4 945.0,518 946.5,519.4 948.0,518 949.5,519.4 951.0,518 952.5,519.4 954.0,518 955.5,519.4 957.0,518 958.5,519.4 960.0,518" fill="none" stroke="#d42a2a" stroke-width="0.6"/></svg>
<div class="a" style="left:595px;top:602px;width:185px;height:50px;background:#ffa30f"></div>
<div class="a" style="left:605px;top:611px;width:165px;height:41px;background:#fff"></div>
<div class="a" style="left:623px;top:620px;width:128px;height:24px;background:#000"></div>
<div class="a" style="left:610px;top:643px;width:154px;height:9px;background:#000"></div>
<span id="t100" class="a tx " style="left:625.00px;transform:scaleX(1.0383);top:625.88px;font-size:15.5px;line-height:15.5px;color:#e0121a;font-weight:bold;font-family:'Liberation Sans',sans-serif;">Отодвиньте это</span>
<div class="a" style="left:1351px;top:129px;width:176px;height:99px;background:#232323"></div>
<span id="t101" class="a tx " style="left:1373.50px;transform:scaleX(0.9798);top:169.80px;font-size:15px;line-height:15px;color:#f2f2f2;font-weight:bold;font-family:'Liberation Sans',sans-serif;">Зульфия&nbsp;&nbsp;Конду...</span>
<div class="a" style="left:1351px;top:208px;width:18px;height:20px;background:#2c2c2c"></div>
<svg class="a" style="left:1354px;top:210px;" width="15" height="16" viewBox="0 0 15 16"><ellipse cx="6.2" cy="4.6" rx="2.8" ry="3.3" fill="#f05c5c"/><ellipse cx="6.8" cy="9.6" rx="2.3" ry="2.8" fill="#f05c5c"/><rect x="4.2" y="12.6" width="5.6" height="1.5" rx=".7" fill="#f05c5c"/><path d="M0.8 14.6 L13.8 1" stroke="#262626" stroke-width="3"/><path d="M0.8 14.6 L13.8 1" stroke="#f05c5c" stroke-width="1.5"/></svg>
<svg class="a" style="left:1351px;top:234px;" width="176" height="98" viewBox="0 0 176 98"><defs><filter id="b1" x="-20%" y="-20%" width="140%" height="140%"><feGaussianBlur stdDeviation="1.2"/></filter>
      <linearGradient id="wall2" x1="0" y1="0" x2="0" y2="1"><stop offset="0" stop-color="#e4e4e6"/><stop offset="1" stop-color="#dcdce0"/></linearGradient></defs>
      <rect width="176" height="98" fill="url(#wall2)"/>
      <g filter="url(#b1)">
      <rect x="67" y="55" width="96" height="45" rx="4" fill="#373a46"/>
      <path d="M0 34 C10 26 32 28 38 44 C42 56 40 70 46 80 L48 98 H0z" fill="#2a2222"/>
      <path d="M0 44 C6 40 14 42 16 52 C17 62 14 70 8 74 L0 74z" fill="#c9a898"/>
      <path d="M0 70 L14 68 L16 84 L0 86z" fill="#9cc0d8"/>
      <path d="M-4 98 C2 86 20 84 40 88 L52 98z" fill="#3a3a48"/>
      <path d="M86 44 C87 27 98 20 107 20 C119 20 129 28 129 46 L129 64 L85 64z" fill="#2a1e1c"/>
      <ellipse cx="107" cy="47" rx="18" ry="19" fill="#cfae9c"/>
      <path d="M96 51 H103 M111 51 H118" stroke="#3a2a28" stroke-width="1.8"/>
      <path d="M95 42 C98 40 102 40 104 42 M110 42 C113 40 117 40 120 42" stroke="#3a2a28" stroke-width="1.2" fill="none"/>
      <path d="M88 64 C94 58 118 58 124 64 C124 76 116 84 106 84 C96 84 88 76 88 64z" fill="#a4c8dc"/>
      <path d="M76 98 C80 86 94 82 106 84 C120 82 134 88 140 98z" fill="#cfc0b2"/>
      <path d="M146 60 L152 88" stroke="#bbb" stroke-width="1.2"/>
      </g></svg>
<div class="a" style="left:1351px;top:314px;width:123px;height:18px;background:rgba(38,38,38,.62)"></div>
<svg class="a" style="left:1354px;top:316px;" width="15" height="16" viewBox="0 0 15 16"><ellipse cx="6.2" cy="4.6" rx="2.8" ry="3.3" fill="#f05c5c"/><ellipse cx="6.8" cy="9.6" rx="2.3" ry="2.8" fill="#f05c5c"/><rect x="4.2" y="12.6" width="5.6" height="1.5" rx=".7" fill="#f05c5c"/><path d="M0.8 14.6 L13.8 1" stroke="#262626" stroke-width="3"/><path d="M0.8 14.6 L13.8 1" stroke="#f05c5c" stroke-width="1.5"/></svg>
<span id="t102" class="a tx " style="left:1373.00px;transform:scaleX(1.0472);top:317.34px;font-size:12px;line-height:12px;color:#fff;font-weight:normal;font-family:'Liberation Sans',sans-serif;">Уразалиева Д...</span>
<div class="a" style="left:1351px;top:339px;width:176px;height:99px;background:#232323"></div>
<svg class="a" style="left:1399px;top:348px;" width="80" height="80" viewBox="0 0 80 80"><defs><filter id="b3"><feGaussianBlur stdDeviation="0.8"/></filter></defs>
      <g filter="url(#b3)">
      <rect width="80" height="80" fill="#ddd0c4"/>
      <rect x="0" y="0" width="24" height="50" fill="#eee6dc"/>
      <rect x="6" y="0" width="6" height="48" fill="#fbf8f2"/>
      <rect x="16" y="0" width="4" height="48" fill="#f6f0e8"/>
      <rect x="66" y="0" width="14" height="52" fill="#f2ece4"/>
      <rect x="70" y="0" width="6" height="50" fill="#fdfaf6"/>
      <rect x="26" y="2" width="30" height="44" fill="#e8e0d8"/>
      <rect x="28" y="10" width="12" height="6" fill="#f29a9a"/>
      <rect x="43" y="10" width="4" height="7" fill="#ec7aa8"/>
      <circle cx="33" cy="26" r="3" fill="#f0a070"/>
      <path d="M46 16 C46 6 58 5 59 16 L60 30 L46 30z" fill="#2a1e1e"/>
      <ellipse cx="52.5" cy="18" rx="4.5" ry="6" fill="#d8a890"/>
      <path d="M42 40 C42 30 64 28 66 42 L72 78 H42z" fill="#e4d6ca"/>
      <path d="M11 42 C11 32 27 31 27 42 L27 50 L11 50z" fill="#221a1a"/>
      <ellipse cx="19" cy="46" rx="6" ry="7" fill="#d0a088"/>
      <path d="M2 80 C2 62 8 54 19 55 C30 54 36 64 36 80z" fill="#e6e6ee"/>
      <path d="M8 60 L15 80 H3z M30 60 L28 80 H36z" fill="#1e1e22"/>
      <path d="M34 44 C34 36 50 36 50 44 L50 49 L34 49z" fill="#201818"/>
      <ellipse cx="42" cy="50" rx="6" ry="6.5" fill="#d6a890"/>
      <path d="M28 80 C28 64 35 58 42 58 C51 58 56 66 56 80z" fill="#d42a22"/>
      <rect x="50" y="64" width="30" height="16" fill="#cfc4b8"/>
      <path d="M52 80 L66 70 L80 66" stroke="#2a2a2a" stroke-width="1.6" fill="none"/>
      <rect x="58" y="58" width="12" height="3" rx="1.5" fill="#d83030"/>
      </g></svg>
<div class="a" style="left:1351px;top:419px;width:123px;height:19px;background:rgba(38,38,38,.62)"></div>
<svg class="a" style="left:1354px;top:421px;" width="15" height="16" viewBox="0 0 15 16"><ellipse cx="6.2" cy="4.6" rx="2.8" ry="3.3" fill="#f05c5c"/><ellipse cx="6.8" cy="9.6" rx="2.3" ry="2.8" fill="#f05c5c"/><rect x="4.2" y="12.6" width="5.6" height="1.5" rx=".7" fill="#f05c5c"/><path d="M0.8 14.6 L13.8 1" stroke="#262626" stroke-width="3"/><path d="M0.8 14.6 L13.8 1" stroke="#f05c5c" stroke-width="1.5"/></svg>
<span id="t103" class="a tx " style="left:1373.00px;transform:scaleX(1.0900);top:422.84px;font-size:12px;line-height:12px;color:#fff;font-weight:normal;font-family:'Liberation Sans',sans-serif;">Шынар Кубаш...</span>
<div class="a" style="left:1347px;top:440px;width:184px;height:107px;background:linear-gradient(180deg,#d2e676 0,#9ede3c 35%,#72d21a 52%,#a4de42 70%,#f0f4a0 100%)"></div>
<div class="a" style="left:1351px;top:444px;width:176px;height:99px;background:#dcdce4"></div>
<svg class="a" style="left:1351px;top:444px;" width="176" height="99" viewBox="0 0 176 99"><defs><filter id="b4" x="-20%" y="-20%" width="140%" height="140%"><feGaussianBlur stdDeviation="1.1"/></filter>
      <linearGradient id="wall4" x1="0" y1="0" x2="1" y2="0"><stop offset="0" stop-color="#d8d8e2"/><stop offset=".6" stop-color="#e4e4ec"/><stop offset="1" stop-color="#d6d6e0"/></linearGradient>
      <radialGradient id="sk4" cx="45%" cy="50%" r="60%"><stop offset="0" stop-color="#c09280"/><stop offset=".7" stop-color="#ac7e6c"/><stop offset="1" stop-color="#8a6050"/></radialGradient></defs>
      <rect width="176" height="99" fill="url(#wall4)"/>
      <g filter="url(#b4)">
      <path d="M28 99 C34 84 46 74 64 70 L96 70 C118 72 140 82 156 99z" fill="#1c2232"/>
      <rect x="64" y="64" width="30" height="14" fill="#a87a68"/>
      <ellipse cx="53" cy="56" rx="3.5" ry="7" fill="#a87a68"/>
      <ellipse cx="106" cy="56" rx="3.5" ry="7" fill="#a87a68"/>
      <ellipse cx="80" cy="50" rx="26" ry="31" fill="url(#sk4)"/>
      <path d="M50 46 C44 18 58 4 80 4 C102 4 112 18 108 44 L104 46 C102 32 94 24 79 23 C64 24 56 32 54 48z" fill="#121212"/>
      <path d="M63 41 C67 39 72 39 75 41 M84 41 C88 39 93 39 97 41" stroke="#2a1a18" stroke-width="2.4" fill="none"/>
      <ellipse cx="69" cy="47" rx="5" ry="1.6" fill="#2a1814"/><ellipse cx="90" cy="47" rx="5" ry="1.6" fill="#2a1814"/><path d="M80 50 L78 62 C80 64 84 64 86 62" stroke="#8a5a4a" stroke-width="1.6" fill="none"/>
      <path d="M72 72 C76 70 84 70 88 72" stroke="#7a3a34" stroke-width="2.2" fill="none"/>
      <ellipse cx="80" cy="90" rx="22" ry="11" fill="#a88070"/>
      </g></svg>
<div class="a" style="left:1351px;top:524px;width:123px;height:19px;background:rgba(38,38,38,.62)"></div>
<span id="t104" class="a tx " style="left:1355.00px;transform:scaleX(1.0528);top:527.84px;font-size:12px;line-height:12px;color:#fff;font-weight:normal;font-family:'Liberation Sans',sans-serif;">Ажгалиев Тлекка...</span>
<div class="a" style="left:1351px;top:549px;width:176px;height:99px;background:#232323"></div>
<span id="t105" class="a tx " style="left:1422.82px;transform:scaleX(0.9305);top:589.80px;font-size:15px;line-height:15px;color:#f2f2f2;font-weight:bold;font-family:'Liberation Sans',sans-serif;">Роза</span>
<div class="a" style="left:1351px;top:628px;width:18px;height:20px;background:#2c2c2c"></div>
<svg class="a" style="left:1354px;top:630px;" width="15" height="16" viewBox="0 0 15 16"><ellipse cx="6.2" cy="4.6" rx="2.8" ry="3.3" fill="#f05c5c"/><ellipse cx="6.8" cy="9.6" rx="2.3" ry="2.8" fill="#f05c5c"/><rect x="4.2" y="12.6" width="5.6" height="1.5" rx=".7" fill="#f05c5c"/><path d="M0.8 14.6 L13.8 1" stroke="#262626" stroke-width="3"/><path d="M0.8 14.6 L13.8 1" stroke="#f05c5c" stroke-width="1.5"/></svg>
<svg class="a" style="left:1351px;top:654px;" width="176" height="99" viewBox="0 0 176 99"><defs><filter id="b6" x="-20%" y="-20%" width="140%" height="140%"><feGaussianBlur stdDeviation="1.2"/></filter>
      <radialGradient id="sk6" cx="45%" cy="40%" r="65%"><stop offset="0" stop-color="#caa08c"/><stop offset=".6" stop-color="#b88c78"/><stop offset="1" stop-color="#9a705e"/></radialGradient></defs>
      <rect width="176" height="99" fill="#dcdce4"/>
      <g filter="url(#b6)">
      <rect x="0" y="0" width="24" height="12" fill="#d4d4dc"/>
      <rect x="0" y="12" width="24" height="36" fill="#b6b2ae"/>
      <path d="M0 46 L26 44 L40 99 H0z" fill="#18181c"/>
      <path d="M16 0 H146 C148 14 146 30 138 40 L126 36 L40 6 L30 30 L18 40z" fill="#141216"/>
      <path d="M28 8 C40 2 110 0 126 10 C132 34 126 60 114 78 C106 90 96 99 80 99 L46 99 C36 88 30 72 27 52z" fill="url(#sk6)"/>
      <path d="M50 17 C58 13 70 14 78 19" stroke="#2a1c1a" stroke-width="2.2" fill="none"/>
      <path d="M94 23 C102 20 112 21 120 27" stroke="#2a1c1a" stroke-width="2.2" fill="none"/>
      <ellipse cx="64" cy="25" rx="9" ry="4" fill="rgba(110,70,60,.45)"/>
      <ellipse cx="107" cy="31" rx="9" ry="4" fill="rgba(110,70,60,.45)"/>
      <path d="M56 24 C62 21 70 22 75 26 C70 27 62 27 56 24z" fill="#2a1a18"/>
      <path d="M98 30 C104 27 112 28 117 32 C112 33 104 33 98 30z" fill="#2a1a18"/>
      <path d="M84 32 C86 44 88 54 92 60 C88 63 82 63 76 60" stroke="#9a6e60" stroke-width="2" fill="none"/>
      <ellipse cx="86" cy="50" rx="7" ry="12" fill="rgba(240,200,180,.35)"/>
      <path d="M62 71 C70 67 86 67 94 72 C86 77 70 77 62 71z" fill="#c44a58"/>
      <ellipse cx="24" cy="47" rx="4.5" ry="6" fill="#e8e0d0"/>
      <path d="M110 99 C118 90 132 84 146 88 L156 99z" fill="#202026"/>
      </g></svg>
<div class="a" style="left:1351px;top:733px;width:123px;height:20px;background:rgba(38,38,38,.62)"></div>
<span id="t106" class="a tx " style="left:1355.00px;transform:scaleX(1.0588);top:738.14px;font-size:12px;line-height:12px;color:#fff;font-weight:normal;font-family:'Liberation Sans',sans-serif;">Дакишева Эльми...</span>
<div class="a" style="left:0px;top:861px;width:1600px;height:39px;background:linear-gradient(90deg,#3c3236 0,#40363a 300px,#3a3034 600px,#3c3236 900px,#32292e 1250px,#2e2629 1450px,#3a3034 1600px)"></div>
<div class="a" style="left:0;top:861px;width:1600px;height:39px;overflow:hidden"><div class="a" style="left:20px;top:22px;width:200px;height:18px;border-radius:50%;background:rgba(140,120,108,.35);filter:blur(6px);transform:rotate(-6deg)"></div><div class="a" style="left:280px;top:24px;width:240px;height:18px;border-radius:50%;background:rgba(160,140,122,.4);filter:blur(6px);transform:rotate(-8deg)"></div><div class="a" style="left:570px;top:22px;width:140px;height:18px;border-radius:50%;background:rgba(165,145,128,.5);filter:blur(6px);transform:rotate(-14deg)"></div><div class="a" style="left:675px;top:11px;width:120px;height:16px;border-radius:50%;background:rgba(175,155,136,.55);filter:blur(6px);transform:rotate(-18deg)"></div><div class="a" style="left:750px;top:18px;width:200px;height:22px;border-radius:50%;background:rgba(175,155,136,.6);filter:blur(6px);transform:rotate(6deg)"></div><div class="a" style="left:910px;top:27px;width:120px;height:16px;border-radius:50%;background:rgba(160,140,122,.45);filter:blur(6px);transform:rotate(10deg)"></div><div class="a" style="left:1035px;top:9px;width:130px;height:16px;border-radius:50%;background:rgba(165,145,128,.55);filter:blur(6px);transform:rotate(-22deg)"></div><div class="a" style="left:1120px;top:24px;width:90px;height:14px;border-radius:50%;background:rgba(150,130,115,.4);filter:blur(6px);transform:rotate(12deg)"></div><div class="a" style="left:1345px;top:23px;width:110px;height:16px;border-radius:50%;background:rgba(130,115,105,.3);filter:blur(6px);transform:rotate(-5deg)"></div></div>
<div class="a" style="left:0px;top:861px;width:1600px;height:1px;background:#8a8080"></div>
<div class="a" style="left:0px;top:862px;width:1600px;height:1px;background:rgba(255,255,255,.12)"></div>
<svg class="a" style="left:8px;top:861px;" width="40" height="39" viewBox="0 0 40 39"><defs><radialGradient id="orb" cx="50%" cy="40%" r="60%"><stop offset="0" stop-color="#5aa6e0"/><stop offset=".6" stop-color="#1f5f9c"/><stop offset="1" stop-color="#0a2a50"/></radialGradient>
      <linearGradient id="gl" x1="0" y1="0" x2="0" y2="1"><stop offset="0" stop-color="rgba(255,255,255,.55)"/><stop offset="1" stop-color="rgba(255,255,255,0)"/></linearGradient></defs>
      <circle cx="19.5" cy="19.5" r="18.5" fill="url(#orb)" stroke="#0c1a2c"/>
      <path d="M9 17 Q13 14 18 16 L17 11 Q13 9 9.5 11z" fill="#f25022"/>
      <path d="M19 16 Q24 18 29 15 L30 9 Q25 12 20 10z" fill="#7fba00"/>
      <path d="M8.5 19 Q12.5 16.5 17.5 18.5 L17 24 Q13 22 9 25z" fill="#00a4ef"/>
      <path d="M19 19 Q24 21 29 18 L28.5 24 Q24 27 19.5 25z" fill="#ffb900"/>
      <ellipse cx="19.5" cy="11" rx="14" ry="8" fill="url(#gl)"/></svg>
<div class="a" style="left:58px;top:865px;width:2px;height:2px;background:rgba(10,10,10,.55);box-shadow:1px 1px 0 rgba(255,255,255,.15)"></div>
<div class="a" style="left:58px;top:869px;width:2px;height:2px;background:rgba(10,10,10,.55);box-shadow:1px 1px 0 rgba(255,255,255,.15)"></div>
<div class="a" style="left:58px;top:873px;width:2px;height:2px;background:rgba(10,10,10,.55);box-shadow:1px 1px 0 rgba(255,255,255,.15)"></div>
<div class="a" style="left:58px;top:877px;width:2px;height:2px;background:rgba(10,10,10,.55);box-shadow:1px 1px 0 rgba(255,255,255,.15)"></div>
<div class="a" style="left:58px;top:881px;width:2px;height:2px;background:rgba(10,10,10,.55);box-shadow:1px 1px 0 rgba(255,255,255,.15)"></div>
<div class="a" style="left:58px;top:885px;width:2px;height:2px;background:rgba(10,10,10,.55);box-shadow:1px 1px 0 rgba(255,255,255,.15)"></div>
<div class="a" style="left:58px;top:889px;width:2px;height:2px;background:rgba(10,10,10,.55);box-shadow:1px 1px 0 rgba(255,255,255,.15)"></div>
<div class="a" style="left:58px;top:893px;width:2px;height:2px;background:rgba(10,10,10,.55);box-shadow:1px 1px 0 rgba(255,255,255,.15)"></div>
<div class="a" style="left:62px;top:865px;width:2px;height:2px;background:rgba(10,10,10,.55);box-shadow:1px 1px 0 rgba(255,255,255,.15)"></div>
<div class="a" style="left:62px;top:869px;width:2px;height:2px;background:rgba(10,10,10,.55);box-shadow:1px 1px 0 rgba(255,255,255,.15)"></div>
<div class="a" style="left:62px;top:873px;width:2px;height:2px;background:rgba(10,10,10,.55);box-shadow:1px 1px 0 rgba(255,255,255,.15)"></div>
<div class="a" style="left:62px;top:877px;width:2px;height:2px;background:rgba(10,10,10,.55);box-shadow:1px 1px 0 rgba(255,255,255,.15)"></div>
<div class="a" style="left:62px;top:881px;width:2px;height:2px;background:rgba(10,10,10,.55);box-shadow:1px 1px 0 rgba(255,255,255,.15)"></div>
<div class="a" style="left:62px;top:885px;width:2px;height:2px;background:rgba(10,10,10,.55);box-shadow:1px 1px 0 rgba(255,255,255,.15)"></div>
<div class="a" style="left:62px;top:889px;width:2px;height:2px;background:rgba(10,10,10,.55);box-shadow:1px 1px 0 rgba(255,255,255,.15)"></div>
<div class="a" style="left:62px;top:893px;width:2px;height:2px;background:rgba(10,10,10,.55);box-shadow:1px 1px 0 rgba(255,255,255,.15)"></div>
<div class="a" style="left:66px;top:865px;width:2px;height:2px;background:rgba(10,10,10,.55);box-shadow:1px 1px 0 rgba(255,255,255,.15)"></div>
<div class="a" style="left:66px;top:869px;width:2px;height:2px;background:rgba(10,10,10,.55);box-shadow:1px 1px 0 rgba(255,255,255,.15)"></div>
<div class="a" style="left:66px;top:873px;width:2px;height:2px;background:rgba(10,10,10,.55);box-shadow:1px 1px 0 rgba(255,255,255,.15)"></div>
<div class="a" style="left:66px;top:877px;width:2px;height:2px;background:rgba(10,10,10,.55);box-shadow:1px 1px 0 rgba(255,255,255,.15)"></div>
<div class="a" style="left:66px;top:881px;width:2px;height:2px;background:rgba(10,10,10,.55);box-shadow:1px 1px 0 rgba(255,255,255,.15)"></div>
<div class="a" style="left:66px;top:885px;width:2px;height:2px;background:rgba(10,10,10,.55);box-shadow:1px 1px 0 rgba(255,255,255,.15)"></div>
<div class="a" style="left:66px;top:889px;width:2px;height:2px;background:rgba(10,10,10,.55);box-shadow:1px 1px 0 rgba(255,255,255,.15)"></div>
<div class="a" style="left:66px;top:893px;width:2px;height:2px;background:rgba(10,10,10,.55);box-shadow:1px 1px 0 rgba(255,255,255,.15)"></div>
<svg class="a" style="left:88px;top:863px;" width="34" height="34" viewBox="0 0 34 34"><defs><linearGradient id="ie" x1="0" y1="0" x2="1" y2="1"><stop offset="0" stop-color="#7ed0ff"/><stop offset="1" stop-color="#0a58b8"/></linearGradient></defs>
      <path d="M6 16 C6 8 12 4 17 4 C24 4 28 10 28 17 H12 C12 22 15 25 19 25 C22 25 24 23 25 21 H28 C27 27 22 30 17 30 C10 30 6 24 6 16z M12 14 H22 C22 10 20 8 17 8 C14 8 12 10 12 14z" fill="url(#ie)"/>
      <path d="M3 30 C-1 26 10 10 24 4 C31 1 34 3 32 6" fill="none" stroke="#f0b828" stroke-width="2.2"/></svg>
<svg class="a" style="left:152px;top:868px;" width="30" height="27" viewBox="0 0 30 27"><rect x="6" y="1" width="22" height="24" fill="#b8d0e4" stroke="#6a9cc8"/><rect x="3" y="2" width="22" height="24" fill="#cde0f0" stroke="#6a9cc8"/><rect x="0.5" y="3" width="22" height="24" fill="#a8c8e8" stroke="#5a8cc0"/>
      <circle cx="11.5" cy="15" r="8.5" fill="#f07820"/><circle cx="11.5" cy="15" r="7" fill="#ff8a2a"/><path d="M9 10.5 L16 15 L9 19.5z" fill="#fff"/></svg>
<svg class="a" style="left:212px;top:863px;" width="34" height="34" viewBox="0 0 34 34"><defs><radialGradient id="ff" cx="50%" cy="70%" r="60%"><stop offset="0" stop-color="#ffd23a"/><stop offset=".5" stop-color="#ff7a1e"/><stop offset="1" stop-color="#e8205a"/></radialGradient></defs>
      <circle cx="17" cy="19" r="14" fill="url(#ff)"/>
      <path d="M22 2 C30 6 33 14 31 20 C29 12 24 8 22 2z" fill="#ffb020"/>
      <circle cx="17" cy="18" r="7.5" fill="#7a3bd8"/><circle cx="15" cy="16" r="4" fill="#9a5cf0"/>
      <path d="M3 14 C5 8 10 6 12 8 C9 9 8 12 9 14z" fill="#ffa030"/></svg>
<div class="a" style="left:262px;top:861px;width:57px;height:38px;border:1px solid rgba(255,255,255,.35);border-radius:2px;background:linear-gradient(180deg,rgba(255,255,255,.28),rgba(255,255,255,.12) 50%,rgba(255,255,255,.2));box-shadow:inset 0 0 0 1px rgba(0,0,0,.2)"></div>
<svg class="a" style="left:275px;top:864px;" width="32" height="32" viewBox="0 0 32 32"><circle cx="16" cy="16" r="15" fill="#db4437"/>
      <path d="M16 16 L3 8.5 A15 15 0 0 0 8.5 29z" fill="#0f9d58"/>
      <path d="M16 16 L8.5 29 A15 15 0 0 0 31 16z" fill="#ffcd40"/>
      <path d="M16 16 L31 16 A15 15 0 0 0 29 8.5 L16 8.5z" fill="#ffcd40"/>
      <path d="M16 16 L29 8.5 A15 15 0 0 0 3 8.5z" fill="#db4437"/>
      <circle cx="16" cy="16" r="7" fill="#fff"/><circle cx="16" cy="16" r="5.6" fill="#4285f4"/></svg>
<svg class="a" style="left:336px;top:866px;" width="34" height="31" viewBox="0 0 34 31"><path d="M1 6 H11 L13 8 H31 V28 H1z" fill="#e8c868" stroke="#b89838"/>
      <rect x="4" y="3" width="8" height="6" fill="#fff" stroke="#888" stroke-width=".5"/><rect x="5" y="3.5" width="3" height="1.5" fill="#2ba02b"/>
      <rect x="13" y="4" width="10" height="6" fill="#fff" stroke="#888" stroke-width=".5"/><rect x="14" y="4.5" width="3" height="1.5" fill="#d02020"/>
      <rect x="22" y="6" width="8" height="6" fill="#fff" stroke="#888" stroke-width=".5"/><rect x="23" y="6.5" width="3" height="1.5" fill="#2060d0"/>
      <path d="M1 11 H31 V29 H1z" fill="#f6dc88"/>
      <path d="M7 30 V20 H25 V30 H21 V24 H11 V30z" fill="#7ec8f0" stroke="#3a88c8"/></svg>
<svg class="a" style="left:399px;top:864px;" width="32" height="32" viewBox="0 0 32 32"><defs><radialGradient id="fr" cx="40%" cy="35%" r="70%"><stop offset="0" stop-color="#f4f4f4"/><stop offset="1" stop-color="#8a8a8a"/></radialGradient></defs>
      <circle cx="16" cy="16" r="15" fill="url(#fr)" stroke="#505868"/>
      <circle cx="16" cy="8" r="3.6" fill="#2a2a2a"/><circle cx="16" cy="24" r="3.6" fill="#2a2a2a"/>
      <circle cx="9" cy="12" r="3.6" fill="#2a2a2a"/><circle cx="23" cy="12" r="3.6" fill="#2a2a2a"/>
      <circle cx="9" cy="20" r="3.6" fill="#2a2a2a"/><circle cx="23" cy="20" r="3.6" fill="#2a2a2a"/>
      <circle cx="16" cy="16" r="2.5" fill="#ccc" stroke="#777" stroke-width=".6"/></svg>
<svg class="a" style="left:460px;top:864px;" width="34" height="33" viewBox="0 0 34 33"><defs><linearGradient id="ml" x1="0" y1="0" x2="0" y2="1"><stop offset="0" stop-color="#18c8ff"/><stop offset="1" stop-color="#0060d0"/></linearGradient></defs>
      <path d="M17 0.5 L33 14 L30 15 V32 H4 V15 L1 14z" fill="url(#ml)"/>
      <circle cx="17" cy="20" r="7" fill="none" stroke="#f8a818" stroke-width="2.4"/><circle cx="17" cy="20" r="3" fill="none" stroke="#f8a818" stroke-width="2"/><path d="M20 18 V22 C20 25 25 25 25 20" fill="none" stroke="#f8a818" stroke-width="2"/></svg>
<div class="a" style="left:510px;top:861px;width:58px;height:38px;border:1px solid rgba(255,255,255,.45);border-radius:2px;background:linear-gradient(180deg,rgba(255,255,255,.4),rgba(255,255,255,.2) 50%,rgba(255,255,255,.3));box-shadow:inset 0 0 0 1px rgba(0,0,0,.2)"></div>
<svg class="a" style="left:523px;top:865px;" width="31" height="31" viewBox="0 0 31 31"><rect x="0.5" y="0.5" width="30" height="30" rx="10" fill="#3d8bf5"/><rect x="6" y="10" width="13" height="11" rx="2" fill="#fff"/><path d="M19.5 14 L25 10.5 V20.5 L19.5 17z" fill="#fff"/></svg>
<div class="a" style="left:1369px;top:866px;width:2px;height:2px;background:rgba(10,10,10,.55);box-shadow:1px 1px 0 rgba(255,255,255,.12)"></div>
<div class="a" style="left:1369px;top:870px;width:2px;height:2px;background:rgba(10,10,10,.55);box-shadow:1px 1px 0 rgba(255,255,255,.12)"></div>
<div class="a" style="left:1369px;top:874px;width:2px;height:2px;background:rgba(10,10,10,.55);box-shadow:1px 1px 0 rgba(255,255,255,.12)"></div>
<div class="a" style="left:1369px;top:878px;width:2px;height:2px;background:rgba(10,10,10,.55);box-shadow:1px 1px 0 rgba(255,255,255,.12)"></div>
<div class="a" style="left:1369px;top:882px;width:2px;height:2px;background:rgba(10,10,10,.55);box-shadow:1px 1px 0 rgba(255,255,255,.12)"></div>
<div class="a" style="left:1369px;top:886px;width:2px;height:2px;background:rgba(10,10,10,.55);box-shadow:1px 1px 0 rgba(255,255,255,.12)"></div>
<div class="a" style="left:1369px;top:890px;width:2px;height:2px;background:rgba(10,10,10,.55);box-shadow:1px 1px 0 rgba(255,255,255,.12)"></div>
<div class="a" style="left:1369px;top:894px;width:2px;height:2px;background:rgba(10,10,10,.55);box-shadow:1px 1px 0 rgba(255,255,255,.12)"></div>
<div class="a" style="left:1373px;top:866px;width:2px;height:2px;background:rgba(10,10,10,.55);box-shadow:1px 1px 0 rgba(255,255,255,.12)"></div>
<div class="a" style="left:1373px;top:870px;width:2px;height:2px;background:rgba(10,10,10,.55);box-shadow:1px 1px 0 rgba(255,255,255,.12)"></div>
<div class="a" style="left:1373px;top:874px;width:2px;height:2px;background:rgba(10,10,10,.55);box-shadow:1px 1px 0 rgba(255,255,255,.12)"></div>
<div class="a" style="left:1373px;top:878px;width:2px;height:2px;background:rgba(10,10,10,.55);box-shadow:1px 1px 0 rgba(255,255,255,.12)"></div>
<div class="a" style="left:1373px;top:882px;width:2px;height:2px;background:rgba(10,10,10,.55);box-shadow:1px 1px 0 rgba(255,255,255,.12)"></div>
<div class="a" style="left:1373px;top:886px;width:2px;height:2px;background:rgba(10,10,10,.55);box-shadow:1px 1px 0 rgba(255,255,255,.12)"></div>
<div class="a" style="left:1373px;top:890px;width:2px;height:2px;background:rgba(10,10,10,.55);box-shadow:1px 1px 0 rgba(255,255,255,.12)"></div>
<div class="a" style="left:1373px;top:894px;width:2px;height:2px;background:rgba(10,10,10,.55);box-shadow:1px 1px 0 rgba(255,255,255,.12)"></div>
<div class="a" style="left:1377px;top:866px;width:2px;height:2px;background:rgba(10,10,10,.55);box-shadow:1px 1px 0 rgba(255,255,255,.12)"></div>
<div class="a" style="left:1377px;top:870px;width:2px;height:2px;background:rgba(10,10,10,.55);box-shadow:1px 1px 0 rgba(255,255,255,.12)"></div>
<div class="a" style="left:1377px;top:874px;width:2px;height:2px;background:rgba(10,10,10,.55);box-shadow:1px 1px 0 rgba(255,255,255,.12)"></div>
<div class="a" style="left:1377px;top:878px;width:2px;height:2px;background:rgba(10,10,10,.55);box-shadow:1px 1px 0 rgba(255,255,255,.12)"></div>
<div class="a" style="left:1377px;top:882px;width:2px;height:2px;background:rgba(10,10,10,.55);box-shadow:1px 1px 0 rgba(255,255,255,.12)"></div>
<div class="a" style="left:1377px;top:886px;width:2px;height:2px;background:rgba(10,10,10,.55);box-shadow:1px 1px 0 rgba(255,255,255,.12)"></div>
<div class="a" style="left:1377px;top:890px;width:2px;height:2px;background:rgba(10,10,10,.55);box-shadow:1px 1px 0 rgba(255,255,255,.12)"></div>
<div class="a" style="left:1377px;top:894px;width:2px;height:2px;background:rgba(10,10,10,.55);box-shadow:1px 1px 0 rgba(255,255,255,.12)"></div>
<span id="t107" class="a tx " style="left:1387.50px;transform:scaleX(0.8435);top:873.84px;font-size:12px;line-height:12px;color:#f0f0f0;font-weight:normal;font-family:'Liberation Sans',sans-serif;">KK</span>
<svg class="a" style="left:1417px;top:874px;" width="9" height="6" viewBox="0 0 9 6"><path d="M0 6 L4.5 0 L9 6z" fill="#e8eef8"/></svg>
<svg class="a" style="left:1438px;top:873px;" width="18" height="17" viewBox="0 0 18 17"><rect x="0" y="0" width="1.5" height="16" fill="#eee"/><path d="M1.5 0.5 H9 L11 3 H14 V9 H7 L5 6.5 H1.5z" fill="#fff"/><circle cx="11" cy="12" r="4.2" fill="#e02828" stroke="#fff" stroke-width="1"/><path d="M9 10 L13 14 M13 10 L9 14" stroke="#fff" stroke-width="1.3"/></svg>
<svg class="a" style="left:1462px;top:872px;" width="17" height="16" viewBox="0 0 17 16"><rect x="0.5" y="0" width="1" height="4" fill="#eee"/><rect x="2.5" y="0" width="1" height="4" fill="#eee"/><rect x="0" y="3" width="4" height="4" fill="#eee"/><rect x="1.5" y="7" width="1" height="8" fill="#eee"/><rect x="4.5" y="3.5" width="11" height="8" fill="none" stroke="#eee" stroke-width="1.3"/><rect x="6" y="13.5" width="8" height="1.3" fill="#eee"/></svg>
<svg class="a" style="left:1486px;top:873px;" width="17" height="16" viewBox="0 0 17 16"><path d="M0.5 5 H4 L9 1 V14 L4 10 H0.5z" fill="#f2f2f2"/><circle cx="12" cy="11" r="4.5" fill="#e02828" stroke="#fff" stroke-width="1"/><path d="M9.5 8.5 L14.5 13.5" stroke="#fff" stroke-width="1.6"/></svg>
<span id="t108" class="a tx " style="left:1533.00px;transform:scaleX(0.8895);top:868.34px;font-size:12px;line-height:12px;color:#f4f4f4;font-weight:normal;font-family:'Liberation Sans',sans-serif;">16:45</span>
<span id="t109" class="a tx " style="left:1519.50px;transform:scaleX(0.8992);top:885.34px;font-size:12px;line-height:12px;color:#f4f4f4;font-weight:normal;font-family:'Liberation Sans',sans-serif;">10.11.2020</span>
<div class="a" style="left:1586px;top:862px;width:13px;height:38px;border:1px solid rgba(255,255,255,.35);background:linear-gradient(135deg,rgba(255,255,255,.15),rgba(0,0,0,.1))"></div>
</body></html>
